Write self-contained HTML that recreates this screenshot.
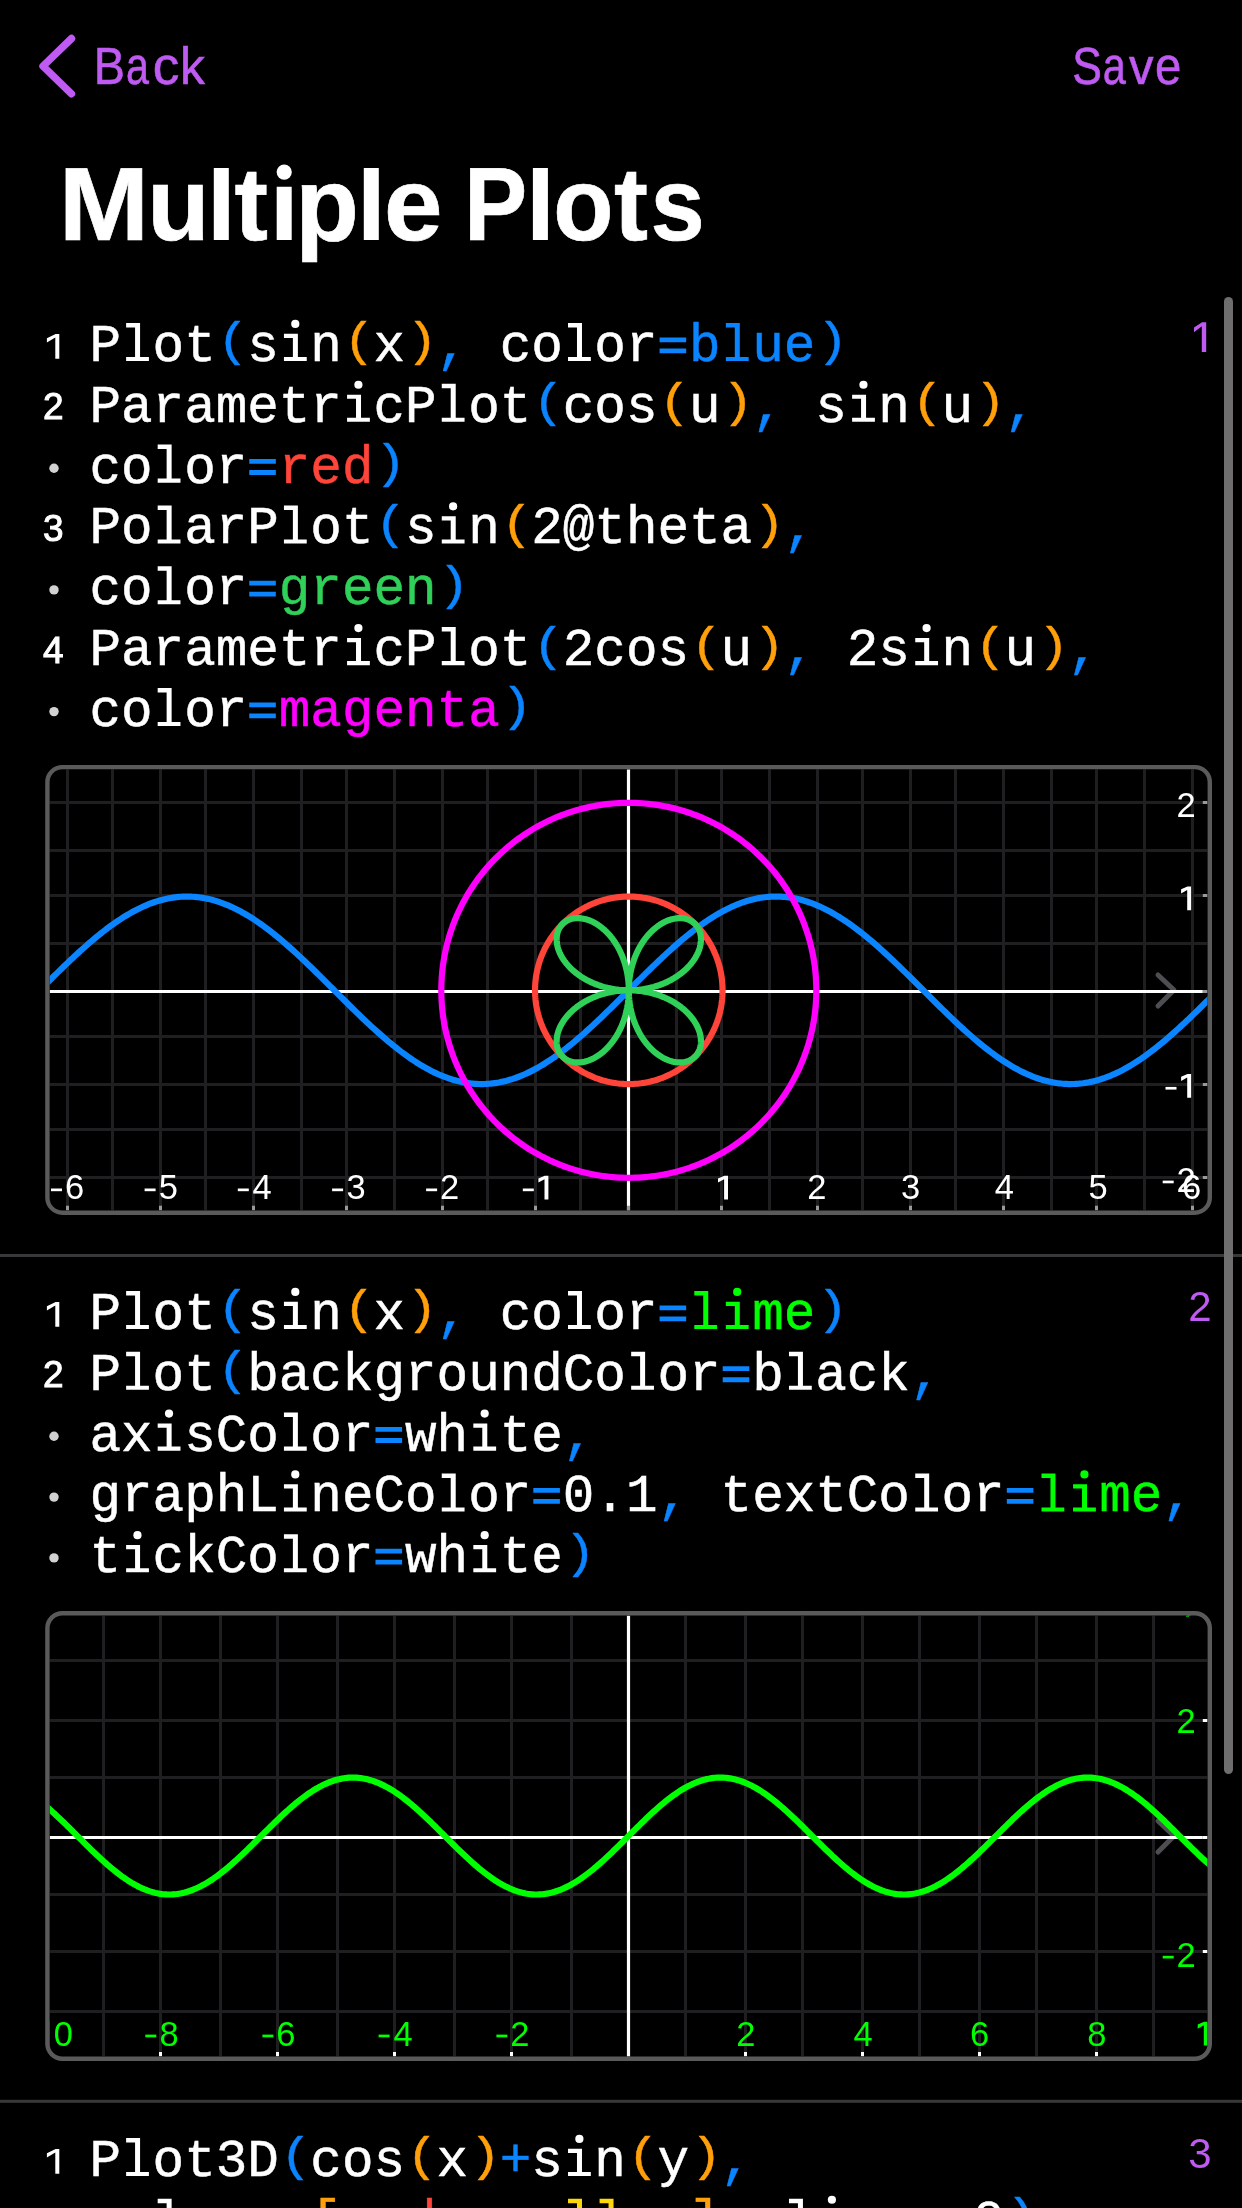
<!DOCTYPE html>
<html><head><meta charset="utf-8"><title>Multiple Plots</title>
<style>
html,body{margin:0;padding:0;background:#000;width:1242px;height:2208px;overflow:hidden;}
svg{display:block;will-change:transform;}
.code{font-family:"Liberation Mono",monospace;font-size:52.6px;stroke-width:0.5px;}
.ln{font-family:"Liberation Sans",sans-serif;font-size:37px;fill:#fff;stroke:#fff;stroke-width:1.0px;}
.sn{font-family:"Liberation Sans",sans-serif;font-size:42px;fill:#BF5AF2;}
.lab{font-family:"Liberation Sans",sans-serif;font-size:34.5px;}
.nav{font-family:"Liberation Sans",sans-serif;font-size:51px;fill:#BF5AF2;stroke:#BF5AF2;stroke-width:0.6px;}
.title{font-family:"Liberation Sans",sans-serif;font-weight:bold;font-size:104.5px;fill:#fff;stroke:#fff;stroke-width:0.7px;}
</style></head>
<body>
<svg width="1242" height="2208" viewBox="0 0 1242 2208">
<rect width="1242" height="2208" fill="#000"/>
<path d="M71.5 38.5L43 66.2L71.5 93.8" stroke="#BF5AF2" stroke-width="7.4" fill="none" stroke-linecap="round" stroke-linejoin="round"/>
<text class="nav" transform="translate(93.76 84) scale(0.9173 1)" x="0" y="0">B</text><text class="nav" transform="translate(125.95 84) scale(0.8092 1)" x="0" y="0">a</text><text class="nav" transform="translate(152.73 84) scale(1.0460 1)" x="0" y="0">c</text><text class="nav" transform="translate(179.95 84) scale(0.9757 1)" x="0" y="0">k</text>
<text class="nav" transform="translate(1072.28 84) scale(0.8719 1)" x="0" y="0">S</text><text class="nav" transform="translate(1102.64 84) scale(0.8131 1)" x="0" y="0">a</text><text class="nav" transform="translate(1128.93 84) scale(0.9622 1)" x="0" y="0">v</text><text class="nav" transform="translate(1154.99 84) scale(0.9277 1)" x="0" y="0">e</text>
<text class="title" transform="translate(58.70 240) scale(1.0374 1)" x="0" y="0">M</text><text class="title" transform="translate(147.13 240) scale(0.9750 1)" x="0" y="0">u</text><text class="title" transform="translate(234.42 240) scale(0.9613 1)" x="0" y="0">t</text><text class="title" transform="translate(295.28 240) scale(0.9970 1)" x="0" y="0">p</text><text class="title" transform="translate(383.94 240) scale(1.0067 1)" x="0" y="0">e</text><text class="title" transform="translate(464.01 240) scale(0.9063 1)" x="0" y="0">P</text><text class="title" transform="translate(553.20 240) scale(0.9431 1)" x="0" y="0">o</text><text class="title" transform="translate(614.10 240) scale(0.9768 1)" x="0" y="0">t</text><text class="title" transform="translate(650.62 240) scale(0.9331 1)" x="0" y="0">s</text>
<path d="M213.8 168H228.8V240H213.8ZM363.8 168H378.8V240H363.8ZM532.9 168H547.9V240H532.9ZM276.7 186.7H291.7V240H276.7Z" fill="#fff"/>
<circle cx="284.2" cy="172.1" r="7.6" fill="#fff"/>
<path d="M59.3 334.0V358.7H55.3V337.6L46.9 342.5V338.3L55.6 334.0Z" fill="#FFFFFF"/>
<text transform="translate(0 361.00) scale(1 1.03)" x="89.5" y="0" class="code" xml:space="preserve"><tspan fill="#FFFFFF" stroke="#FFFFFF">P ot</tspan><tspan fill="#0A84FF" stroke="#0A84FF"> </tspan><tspan fill="#FFFFFF" stroke="#FFFFFF">s n</tspan><tspan fill="#FF9F0A" stroke="#FF9F0A"> </tspan><tspan fill="#FFFFFF" stroke="#FFFFFF">x</tspan><tspan fill="#FF9F0A" stroke="#FF9F0A"> </tspan><tspan fill="#0A84FF" stroke="#0A84FF">,</tspan><tspan fill="#FFFFFF" stroke="#FFFFFF"> co or</tspan><tspan fill="#0A84FF" stroke="#0A84FF"> </tspan><tspan fill="#0A84FF" stroke="#0A84FF">b ue</tspan><tspan fill="#0A84FF" stroke="#0A84FF"> </tspan></text>
<path d="M126.12 322.90H140.07V356.90H148.92V361.00H126.12V356.90H135.07V327.40H126.12Z" fill="#FFFFFF"/>
<text class="code" fill="#0A84FF" stroke="#0A84FF" transform="translate(216.96 355.40) scale(1 0.895)" x="0" y="0">(</text>
<path d="M283.94 333.80H297.89V356.90H306.74V361.00H283.94V356.90H292.89V338.00H283.94Z" fill="#FFFFFF"/><circle cx="295.29" cy="323.90" r="4.1" fill="#FFFFFF"/>
<text class="code" fill="#FF9F0A" stroke="#FF9F0A" transform="translate(343.22 355.40) scale(1 0.895)" x="0" y="0">(</text>
<text class="code" fill="#FF9F0A" stroke="#FF9F0A" transform="translate(406.35 355.40) scale(1 0.895)" x="0" y="0">)</text>
<path d="M568.03 322.90H581.98V356.90H590.83V361.00H568.03V356.90H576.98V327.40H568.03Z" fill="#FFFFFF"/>
<path d="M659.57 337.40h26.6v4.8h-26.6zM659.57 348.40h26.6v4.9h-26.6z" fill="#0A84FF"/>
<path d="M725.85 322.90H739.80V356.90H748.65V361.00H725.85V356.90H734.80V327.40H725.85Z" fill="#0A84FF"/>
<text class="code" fill="#0A84FF" stroke="#0A84FF" transform="translate(816.70 355.40) scale(1 0.895)" x="0" y="0">)</text>
<text x="53.3" y="419.4" class="ln" text-anchor="middle">2</text>
<text transform="translate(0 421.83) scale(1 1.03)" x="89.5" y="0" class="code" xml:space="preserve"><tspan fill="#FFFFFF" stroke="#FFFFFF">Parametr cP ot</tspan><tspan fill="#0A84FF" stroke="#0A84FF"> </tspan><tspan fill="#FFFFFF" stroke="#FFFFFF">cos</tspan><tspan fill="#FF9F0A" stroke="#FF9F0A"> </tspan><tspan fill="#FFFFFF" stroke="#FFFFFF">u</tspan><tspan fill="#FF9F0A" stroke="#FF9F0A"> </tspan><tspan fill="#0A84FF" stroke="#0A84FF">,</tspan><tspan fill="#FFFFFF" stroke="#FFFFFF"> s n</tspan><tspan fill="#FF9F0A" stroke="#FF9F0A"> </tspan><tspan fill="#FFFFFF" stroke="#FFFFFF">u</tspan><tspan fill="#FF9F0A" stroke="#FF9F0A"> </tspan><tspan fill="#0A84FF" stroke="#0A84FF">,</tspan></text>
<path d="M347.07 394.63H361.02V417.73H369.87V421.83H347.07V417.73H356.02V398.83H347.07Z" fill="#FFFFFF"/><circle cx="358.42" cy="384.73" r="4.1" fill="#FFFFFF"/>
<path d="M441.77 383.73H455.72V417.73H464.57V421.83H441.77V417.73H450.72V388.23H441.77Z" fill="#FFFFFF"/>
<text class="code" fill="#0A84FF" stroke="#0A84FF" transform="translate(532.61 416.23) scale(1 0.895)" x="0" y="0">(</text>
<text class="code" fill="#FF9F0A" stroke="#FF9F0A" transform="translate(658.87 416.23) scale(1 0.895)" x="0" y="0">(</text>
<text class="code" fill="#FF9F0A" stroke="#FF9F0A" transform="translate(722.00 416.23) scale(1 0.895)" x="0" y="0">)</text>
<path d="M852.11 394.63H866.06V417.73H874.91V421.83H852.11V417.73H861.06V398.83H852.11Z" fill="#FFFFFF"/><circle cx="863.46" cy="384.73" r="4.1" fill="#FFFFFF"/>
<text class="code" fill="#FF9F0A" stroke="#FF9F0A" transform="translate(911.39 416.23) scale(1 0.895)" x="0" y="0">(</text>
<text class="code" fill="#FF9F0A" stroke="#FF9F0A" transform="translate(974.52 416.23) scale(1 0.895)" x="0" y="0">)</text>
<circle cx="54" cy="468.3" r="4.7" fill="#D2D2D2"/>
<text transform="translate(0 482.66) scale(1 1.03)" x="89.5" y="0" class="code" xml:space="preserve"><tspan fill="#FFFFFF" stroke="#FFFFFF">co or</tspan><tspan fill="#0A84FF" stroke="#0A84FF"> </tspan><tspan fill="#FF453A" stroke="#FF453A">red</tspan><tspan fill="#0A84FF" stroke="#0A84FF"> </tspan></text>
<path d="M157.68 444.56H171.63V478.56H180.48V482.66H157.68V478.56H166.63V449.06H157.68Z" fill="#FFFFFF"/>
<path d="M249.23 459.06h26.6v4.8h-26.6zM249.23 470.06h26.6v4.9h-26.6z" fill="#0A84FF"/>
<text class="code" fill="#0A84FF" stroke="#0A84FF" transform="translate(374.79 477.06) scale(1 0.895)" x="0" y="0">)</text>
<text x="53.3" y="541.1" class="ln" text-anchor="middle">3</text>
<text transform="translate(0 543.49) scale(1 1.03)" x="89.5" y="0" class="code" xml:space="preserve"><tspan fill="#FFFFFF" stroke="#FFFFFF">Po arP ot</tspan><tspan fill="#0A84FF" stroke="#0A84FF"> </tspan><tspan fill="#FFFFFF" stroke="#FFFFFF">s n</tspan><tspan fill="#FF9F0A" stroke="#FF9F0A"> </tspan><tspan fill="#FFFFFF" stroke="#FFFFFF">2@theta</tspan><tspan fill="#FF9F0A" stroke="#FF9F0A"> </tspan><tspan fill="#0A84FF" stroke="#0A84FF">,</tspan></text>
<path d="M157.68 505.39H171.63V539.39H180.48V543.49H157.68V539.39H166.63V509.89H157.68Z" fill="#FFFFFF"/>
<path d="M283.94 505.39H297.89V539.39H306.74V543.49H283.94V539.39H292.89V509.89H283.94Z" fill="#FFFFFF"/>
<text class="code" fill="#0A84FF" stroke="#0A84FF" transform="translate(374.79 537.89) scale(1 0.895)" x="0" y="0">(</text>
<path d="M441.77 516.29H455.72V539.39H464.57V543.49H441.77V539.39H450.72V520.49H441.77Z" fill="#FFFFFF"/><circle cx="453.12" cy="506.39" r="4.1" fill="#FFFFFF"/>
<text class="code" fill="#FF9F0A" stroke="#FF9F0A" transform="translate(501.05 537.89) scale(1 0.895)" x="0" y="0">(</text>
<text class="code" fill="#FF9F0A" stroke="#FF9F0A" transform="translate(753.57 537.89) scale(1 0.895)" x="0" y="0">)</text>
<circle cx="54" cy="589.9" r="4.7" fill="#D2D2D2"/>
<text transform="translate(0 604.32) scale(1 1.03)" x="89.5" y="0" class="code" xml:space="preserve"><tspan fill="#FFFFFF" stroke="#FFFFFF">co or</tspan><tspan fill="#0A84FF" stroke="#0A84FF"> </tspan><tspan fill="#30D158" stroke="#30D158">green</tspan><tspan fill="#0A84FF" stroke="#0A84FF"> </tspan></text>
<path d="M157.68 566.22H171.63V600.22H180.48V604.32H157.68V600.22H166.63V570.72H157.68Z" fill="#FFFFFF"/>
<path d="M249.23 580.72h26.6v4.8h-26.6zM249.23 591.72h26.6v4.9h-26.6z" fill="#0A84FF"/>
<text class="code" fill="#0A84FF" stroke="#0A84FF" transform="translate(437.92 598.72) scale(1 0.895)" x="0" y="0">)</text>
<text x="53.3" y="662.8" class="ln" text-anchor="middle">4</text>
<text transform="translate(0 665.15) scale(1 1.03)" x="89.5" y="0" class="code" xml:space="preserve"><tspan fill="#FFFFFF" stroke="#FFFFFF">Parametr cP ot</tspan><tspan fill="#0A84FF" stroke="#0A84FF"> </tspan><tspan fill="#FFFFFF" stroke="#FFFFFF">2cos</tspan><tspan fill="#FF9F0A" stroke="#FF9F0A"> </tspan><tspan fill="#FFFFFF" stroke="#FFFFFF">u</tspan><tspan fill="#FF9F0A" stroke="#FF9F0A"> </tspan><tspan fill="#0A84FF" stroke="#0A84FF">,</tspan><tspan fill="#FFFFFF" stroke="#FFFFFF"> 2s n</tspan><tspan fill="#FF9F0A" stroke="#FF9F0A"> </tspan><tspan fill="#FFFFFF" stroke="#FFFFFF">u</tspan><tspan fill="#FF9F0A" stroke="#FF9F0A"> </tspan><tspan fill="#0A84FF" stroke="#0A84FF">,</tspan></text>
<path d="M347.07 637.95H361.02V661.05H369.87V665.15H347.07V661.05H356.02V642.15H347.07Z" fill="#FFFFFF"/><circle cx="358.42" cy="628.05" r="4.1" fill="#FFFFFF"/>
<path d="M441.77 627.05H455.72V661.05H464.57V665.15H441.77V661.05H450.72V631.55H441.77Z" fill="#FFFFFF"/>
<text class="code" fill="#0A84FF" stroke="#0A84FF" transform="translate(532.61 659.55) scale(1 0.895)" x="0" y="0">(</text>
<text class="code" fill="#FF9F0A" stroke="#FF9F0A" transform="translate(690.44 659.55) scale(1 0.895)" x="0" y="0">(</text>
<text class="code" fill="#FF9F0A" stroke="#FF9F0A" transform="translate(753.57 659.55) scale(1 0.895)" x="0" y="0">)</text>
<path d="M915.24 637.95H929.19V661.05H938.04V665.15H915.24V661.05H924.19V642.15H915.24Z" fill="#FFFFFF"/><circle cx="926.59" cy="628.05" r="4.1" fill="#FFFFFF"/>
<text class="code" fill="#FF9F0A" stroke="#FF9F0A" transform="translate(974.52 659.55) scale(1 0.895)" x="0" y="0">(</text>
<text class="code" fill="#FF9F0A" stroke="#FF9F0A" transform="translate(1037.65 659.55) scale(1 0.895)" x="0" y="0">)</text>
<circle cx="54" cy="711.6" r="4.7" fill="#D2D2D2"/>
<text transform="translate(0 725.98) scale(1 1.03)" x="89.5" y="0" class="code" xml:space="preserve"><tspan fill="#FFFFFF" stroke="#FFFFFF">co or</tspan><tspan fill="#0A84FF" stroke="#0A84FF"> </tspan><tspan fill="#FF00FF" stroke="#FF00FF">magenta</tspan><tspan fill="#0A84FF" stroke="#0A84FF"> </tspan></text>
<path d="M157.68 687.88H171.63V721.88H180.48V725.98H157.68V721.88H166.63V692.38H157.68Z" fill="#FFFFFF"/>
<path d="M249.23 702.38h26.6v4.8h-26.6zM249.23 713.38h26.6v4.9h-26.6z" fill="#0A84FF"/>
<text class="code" fill="#0A84FF" stroke="#0A84FF" transform="translate(501.05 720.38) scale(1 0.895)" x="0" y="0">)</text>
<path d="M1206.2 322.2V352.0H1201.8V326.2L1194.0 332.2V327.6L1202.1 322.2Z" fill="#BF5AF2"/>
<clipPath id="c1"><rect x="49.6" y="769.3" width="1158.0" height="441.20000000000005" rx="12"/></clipPath>
<g clip-path="url(#c1)">
<path d="M67.5 769.3V1210.5 M112.5 769.3V1210.5 M160.5 769.3V1210.5 M205.5 769.3V1210.5 M253.5 769.3V1210.5 M301.5 769.3V1210.5 M346.5 769.3V1210.5 M394.5 769.3V1210.5 M442.5 769.3V1210.5 M487.5 769.3V1210.5 M535.5 769.3V1210.5 M580.5 769.3V1210.5 M628.5 769.3V1210.5 M676.5 769.3V1210.5 M721.5 769.3V1210.5 M769.5 769.3V1210.5 M817.5 769.3V1210.5 M862.5 769.3V1210.5 M910.5 769.3V1210.5 M955.5 769.3V1210.5 M1003.5 769.3V1210.5 M1051.5 769.3V1210.5 M1096.5 769.3V1210.5 M1144.5 769.3V1210.5 M1192.5 769.3V1210.5 M49.6 1177.5H1207.6 M49.6 1129.5H1207.6 M49.6 1084.5H1207.6 M49.6 1036.5H1207.6 M49.6 991.5H1207.6 M49.6 943.5H1207.6 M49.6 895.5H1207.6 M49.6 850.5H1207.6 M49.6 802.5H1207.6" stroke="#1F1F21" stroke-width="3" fill="none"/>
<path d="M1158 975.0L1174 990.0L1158 1006.0" stroke="#4E4E52" stroke-width="5" fill="none" stroke-linecap="round" stroke-linejoin="round"/>
<path d="M628.5 769.3V1210.5M49.6 991.5H1202.8" stroke="#FFFFFF" stroke-width="3.2" fill="none"/>
<path d="M67.5 1205.8V1210.5 M160.5 1205.8V1210.5 M253.5 1205.8V1210.5 M346.5 1205.8V1210.5 M442.5 1205.8V1210.5 M535.5 1205.8V1210.5 M628.5 1205.8V1210.5 M721.5 1205.8V1210.5 M817.5 1205.8V1210.5 M910.5 1205.8V1210.5 M1003.5 1205.8V1210.5 M1096.5 1205.8V1210.5 M1192.5 1205.8V1210.5 M1202.8 802.5H1207.6 M1202.8 895.5H1207.6 M1202.8 991.5H1207.6 M1202.8 1084.5H1207.6 M1202.8 1177.5H1207.6" stroke="#9A9A9A" stroke-width="3" fill="none"/>
<path d="M28.80 1001.23L30.80 999.24L32.80 997.25L34.80 995.25L36.80 993.25L38.80 991.25L40.80 989.25L42.80 987.25L44.80 985.25L46.80 983.26L48.80 981.27L50.80 979.28L52.80 977.29L54.80 975.32L56.80 973.35L58.80 971.38L60.80 969.43L62.80 967.48L64.80 965.55L66.80 963.63L68.80 961.71L70.80 959.82L72.80 957.93L74.80 956.06L76.80 954.21L78.80 952.37L80.80 950.55L82.80 948.75L84.80 946.97L86.80 945.20L88.80 943.46L90.80 941.74L92.80 940.04L94.80 938.36L96.80 936.71L98.80 935.08L100.80 933.48L102.80 931.90L104.80 930.35L106.80 928.82L108.80 927.33L110.80 925.86L112.80 924.42L114.80 923.01L116.80 921.64L118.80 920.29L120.80 918.98L122.80 917.69L124.80 916.45L126.80 915.23L128.80 914.05L130.80 912.90L132.80 911.79L134.80 910.72L136.80 909.68L138.80 908.68L140.80 907.71L142.80 906.78L144.80 905.89L146.80 905.04L148.80 904.23L150.80 903.46L152.80 902.72L154.80 902.03L156.80 901.38L158.80 900.76L160.80 900.19L162.80 899.66L164.80 899.17L166.80 898.72L168.80 898.31L170.80 897.95L172.80 897.63L174.80 897.34L176.80 897.11L178.80 896.91L180.80 896.76L182.80 896.64L184.80 896.58L186.80 896.55L188.80 896.57L190.80 896.63L192.80 896.73L194.80 896.87L196.80 897.06L198.80 897.29L200.80 897.56L202.80 897.88L204.80 898.23L206.80 898.63L208.80 899.07L210.80 899.55L212.80 900.07L214.80 900.64L216.80 901.24L218.80 901.89L220.80 902.57L222.80 903.30L224.80 904.06L226.80 904.87L228.80 905.71L230.80 906.59L232.80 907.51L234.80 908.47L236.80 909.46L238.80 910.49L240.80 911.56L242.80 912.66L244.80 913.80L246.80 914.98L248.80 916.18L250.80 917.43L252.80 918.70L254.80 920.01L256.80 921.35L258.80 922.72L260.80 924.12L262.80 925.55L264.80 927.01L266.80 928.50L268.80 930.02L270.80 931.56L272.80 933.14L274.80 934.73L276.80 936.36L278.80 938.01L280.80 939.68L282.80 941.37L284.80 943.09L286.80 944.83L288.80 946.59L290.80 948.37L292.80 950.16L294.80 951.98L296.80 953.81L298.80 955.66L300.80 957.53L302.80 959.41L304.80 961.31L306.80 963.22L308.80 965.14L310.80 967.07L312.80 969.01L314.80 970.96L316.80 972.93L318.80 974.89L320.80 976.87L322.80 978.85L324.80 980.84L326.80 982.83L328.80 984.83L330.80 986.83L332.80 988.82L334.80 990.82L336.80 992.82L338.80 994.82L340.80 996.82L342.80 998.81L344.80 1000.80L346.80 1002.79L348.80 1004.77L350.80 1006.74L352.80 1008.70L354.80 1010.66L356.80 1012.61L358.80 1014.55L360.80 1016.47L362.80 1018.39L364.80 1020.29L366.80 1022.18L368.80 1024.05L370.80 1025.91L372.80 1027.75L374.80 1029.57L376.80 1031.38L378.80 1033.17L380.80 1034.94L382.80 1036.69L384.80 1038.41L386.80 1040.12L388.80 1041.80L390.80 1043.46L392.80 1045.10L394.80 1046.71L396.80 1048.29L398.80 1049.85L400.80 1051.38L402.80 1052.88L404.80 1054.36L406.80 1055.80L408.80 1057.22L410.80 1058.61L412.80 1059.96L414.80 1061.28L416.80 1062.57L418.80 1063.83L420.80 1065.05L422.80 1066.24L424.80 1067.40L426.80 1068.52L428.80 1069.60L430.80 1070.65L432.80 1071.66L434.80 1072.64L436.80 1073.58L438.80 1074.48L440.80 1075.34L442.80 1076.16L444.80 1076.94L446.80 1077.69L448.80 1078.39L450.80 1079.06L452.80 1079.68L454.80 1080.26L456.80 1080.81L458.80 1081.31L460.80 1081.77L462.80 1082.18L464.80 1082.56L466.80 1082.89L468.80 1083.19L470.80 1083.44L472.80 1083.64L474.80 1083.81L476.80 1083.93L478.80 1084.01L480.80 1084.05L482.80 1084.04L484.80 1083.99L486.80 1083.90L488.80 1083.77L490.80 1083.59L492.80 1083.37L494.80 1083.11L496.80 1082.81L498.80 1082.47L500.80 1082.08L502.80 1081.65L504.80 1081.18L506.80 1080.67L508.80 1080.11L510.80 1079.52L512.80 1078.89L514.80 1078.21L516.80 1077.50L518.80 1076.74L520.80 1075.95L522.80 1075.12L524.80 1074.24L526.80 1073.33L528.80 1072.39L530.80 1071.40L532.80 1070.38L534.80 1069.32L536.80 1068.23L538.80 1067.10L540.80 1065.93L542.80 1064.74L544.80 1063.50L546.80 1062.24L548.80 1060.94L550.80 1059.61L552.80 1058.25L554.80 1056.85L556.80 1055.43L558.80 1053.97L560.80 1052.49L562.80 1050.98L564.80 1049.44L566.80 1047.88L568.80 1046.29L570.80 1044.67L572.80 1043.03L574.80 1041.36L576.80 1039.67L578.80 1037.96L580.80 1036.23L582.80 1034.48L584.80 1032.70L586.80 1030.91L588.80 1029.10L590.80 1027.27L592.80 1025.42L594.80 1023.56L596.80 1021.68L598.80 1019.79L600.80 1017.89L602.80 1015.97L604.80 1014.04L606.80 1012.10L608.80 1010.15L610.80 1008.19L612.80 1006.22L614.80 1004.25L616.80 1002.27L618.80 1000.28L620.80 998.29L622.80 996.30L624.80 994.30L626.80 992.30L628.80 990.30L630.80 988.30L632.80 986.30L634.80 984.30L636.80 982.31L638.80 980.32L640.80 978.33L642.80 976.35L644.80 974.38L646.80 972.41L648.80 970.45L650.80 968.50L652.80 966.56L654.80 964.63L656.80 962.71L658.80 960.81L660.80 958.92L662.80 957.04L664.80 955.18L666.80 953.33L668.80 951.50L670.80 949.69L672.80 947.90L674.80 946.12L676.80 944.37L678.80 942.64L680.80 940.93L682.80 939.24L684.80 937.57L686.80 935.93L688.80 934.31L690.80 932.72L692.80 931.16L694.80 929.62L696.80 928.11L698.80 926.63L700.80 925.17L702.80 923.75L704.80 922.35L706.80 920.99L708.80 919.66L710.80 918.36L712.80 917.10L714.80 915.86L716.80 914.67L718.80 913.50L720.80 912.37L722.80 911.28L724.80 910.22L726.80 909.20L728.80 908.21L730.80 907.27L732.80 906.36L734.80 905.48L736.80 904.65L738.80 903.86L740.80 903.10L742.80 902.39L744.80 901.71L746.80 901.08L748.80 900.49L750.80 899.93L752.80 899.42L754.80 898.95L756.80 898.52L758.80 898.13L760.80 897.79L762.80 897.49L764.80 897.23L766.80 897.01L768.80 896.83L770.80 896.70L772.80 896.61L774.80 896.56L776.80 896.55L778.80 896.59L780.80 896.67L782.80 896.79L784.80 896.96L786.80 897.16L788.80 897.41L790.80 897.71L792.80 898.04L794.80 898.42L796.80 898.83L798.80 899.29L800.80 899.79L802.80 900.34L804.80 900.92L806.80 901.54L808.80 902.21L810.80 902.91L812.80 903.66L814.80 904.44L816.80 905.26L818.80 906.12L820.80 907.02L822.80 907.96L824.80 908.94L826.80 909.95L828.80 911.00L830.80 912.08L832.80 913.20L834.80 914.36L836.80 915.55L838.80 916.77L840.80 918.03L842.80 919.32L844.80 920.64L846.80 921.99L848.80 923.38L850.80 924.80L852.80 926.24L854.80 927.72L856.80 929.22L858.80 930.75L860.80 932.31L862.80 933.89L864.80 935.50L866.80 937.14L868.80 938.80L870.80 940.48L872.80 942.19L874.80 943.91L876.80 945.66L878.80 947.43L880.80 949.22L882.80 951.03L884.80 952.85L886.80 954.69L888.80 956.55L890.80 958.42L892.80 960.31L894.80 962.21L896.80 964.13L898.80 966.05L900.80 967.99L902.80 969.94L904.80 971.90L906.80 973.86L908.80 975.83L910.80 977.81L912.80 979.80L914.80 981.79L916.80 983.78L918.80 985.78L920.80 987.78L922.80 989.78L924.80 991.78L926.80 993.77L928.80 995.77L930.80 997.77L932.80 999.76L934.80 1001.75L936.80 1003.73L938.80 1005.71L940.80 1007.67L942.80 1009.64L944.80 1011.59L946.80 1013.53L948.80 1015.46L950.80 1017.38L952.80 1019.29L954.80 1021.19L956.80 1023.07L958.80 1024.94L960.80 1026.79L962.80 1028.62L964.80 1030.44L966.80 1032.23L968.80 1034.01L970.80 1035.77L972.80 1037.51L974.80 1039.23L976.80 1040.92L978.80 1042.59L980.80 1044.24L982.80 1045.87L984.80 1047.46L986.80 1049.04L988.80 1050.58L990.80 1052.10L992.80 1053.59L994.80 1055.05L996.80 1056.48L998.80 1057.88L1000.80 1059.25L1002.80 1060.59L1004.80 1061.90L1006.80 1063.17L1008.80 1064.42L1010.80 1065.62L1012.80 1066.80L1014.80 1067.94L1016.80 1069.04L1018.80 1070.11L1020.80 1071.14L1022.80 1072.13L1024.80 1073.09L1026.80 1074.01L1028.80 1074.89L1030.80 1075.73L1032.80 1076.54L1034.80 1077.30L1036.80 1078.03L1038.80 1078.71L1040.80 1079.36L1042.80 1079.96L1044.80 1080.53L1046.80 1081.05L1048.80 1081.53L1050.80 1081.97L1052.80 1082.37L1054.80 1082.72L1056.80 1083.04L1058.80 1083.31L1060.80 1083.54L1062.80 1083.73L1064.80 1083.87L1066.80 1083.97L1068.80 1084.03L1070.80 1084.05L1072.80 1084.02L1074.80 1083.96L1076.80 1083.84L1078.80 1083.69L1080.80 1083.49L1082.80 1083.26L1084.80 1082.97L1086.80 1082.65L1088.80 1082.29L1090.80 1081.88L1092.80 1081.43L1094.80 1080.94L1096.80 1080.41L1098.80 1079.84L1100.80 1079.22L1102.80 1078.57L1104.80 1077.88L1106.80 1077.14L1108.80 1076.37L1110.80 1075.56L1112.80 1074.71L1114.80 1073.82L1116.80 1072.89L1118.80 1071.92L1120.80 1070.92L1122.80 1069.88L1124.80 1068.81L1126.80 1067.70L1128.80 1066.55L1130.80 1065.37L1132.80 1064.15L1134.80 1062.91L1136.80 1061.62L1138.80 1060.31L1140.80 1058.96L1142.80 1057.59L1144.80 1056.18L1146.80 1054.74L1148.80 1053.27L1150.80 1051.78L1152.80 1050.25L1154.80 1048.70L1156.80 1047.12L1158.80 1045.52L1160.80 1043.89L1162.80 1042.24L1164.80 1040.56L1166.80 1038.86L1168.80 1037.14L1170.80 1035.40L1172.80 1033.63L1174.80 1031.85L1176.80 1030.05L1178.80 1028.23L1180.80 1026.39L1182.80 1024.54L1184.80 1022.67L1186.80 1020.78L1188.80 1018.89L1190.80 1016.97L1192.80 1015.05L1194.80 1013.12L1196.80 1011.17L1198.80 1009.22L1200.80 1007.25L1202.80 1005.28L1204.80 1003.31L1206.80 1001.32L1208.80 999.33L1210.80 997.34L1212.80 995.35L1214.80 993.35L1216.80 991.35L1218.80 989.35L1220.80 987.35L1222.80 985.35L1224.80 983.35L1226.80 981.36L1228.80 979.37" stroke="#0A84FF" stroke-width="6.2" fill="none" stroke-linejoin="round"/>
<path d="M722.55 990.30L722.52 987.85L722.42 985.39L722.26 982.94L722.04 980.50L721.75 978.06L721.40 975.63L720.98 973.22L720.50 970.81L719.96 968.41L719.36 966.04L718.69 963.67L717.96 961.33L717.17 959.01L716.32 956.70L715.41 954.42L714.44 952.17L713.42 949.94L712.33 947.74L711.19 945.57L709.99 943.43L708.74 941.32L707.43 939.24L706.06 937.20L704.65 935.20L703.18 933.23L701.66 931.30L700.09 929.41L698.47 927.57L696.80 925.77L695.09 924.01L693.33 922.30L691.53 920.63L689.69 919.01L687.80 917.44L685.87 915.92L683.90 914.45L681.90 913.04L679.86 911.67L677.78 910.36L675.67 909.11L673.53 907.91L671.36 906.77L669.16 905.68L666.93 904.66L664.68 903.69L662.40 902.78L660.09 901.93L657.77 901.14L655.43 900.41L653.06 899.74L650.69 899.14L648.29 898.60L645.88 898.12L643.47 897.70L641.04 897.35L638.60 897.06L636.16 896.84L633.71 896.68L631.25 896.58L628.80 896.55L626.35 896.58L623.89 896.68L621.44 896.84L619.00 897.06L616.56 897.35L614.13 897.70L611.72 898.12L609.31 898.60L606.91 899.14L604.54 899.74L602.17 900.41L599.83 901.14L597.51 901.93L595.20 902.78L592.92 903.69L590.67 904.66L588.44 905.68L586.24 906.77L584.07 907.91L581.92 909.11L579.82 910.36L577.74 911.67L575.70 913.04L573.70 914.45L571.73 915.92L569.80 917.44L567.91 919.01L566.07 920.63L564.27 922.30L562.51 924.01L560.80 925.77L559.13 927.57L557.51 929.41L555.94 931.30L554.42 933.23L552.95 935.20L551.54 937.20L550.17 939.24L548.86 941.32L547.61 943.43L546.41 945.57L545.27 947.74L544.18 949.94L543.16 952.17L542.19 954.42L541.28 956.70L540.43 959.01L539.64 961.33L538.91 963.67L538.24 966.04L537.64 968.41L537.10 970.81L536.62 973.22L536.20 975.63L535.85 978.06L535.56 980.50L535.34 982.94L535.18 985.39L535.08 987.85L535.05 990.30L535.08 992.75L535.18 995.21L535.34 997.66L535.56 1000.10L535.85 1002.54L536.20 1004.97L536.62 1007.38L537.10 1009.79L537.64 1012.19L538.24 1014.56L538.91 1016.93L539.64 1019.27L540.43 1021.59L541.28 1023.90L542.19 1026.18L543.16 1028.43L544.18 1030.66L545.27 1032.86L546.41 1035.03L547.61 1037.17L548.86 1039.28L550.17 1041.36L551.54 1043.40L552.95 1045.40L554.42 1047.37L555.94 1049.30L557.51 1051.19L559.13 1053.03L560.80 1054.83L562.51 1056.59L564.27 1058.30L566.07 1059.97L567.91 1061.59L569.80 1063.16L571.73 1064.68L573.70 1066.15L575.70 1067.56L577.74 1068.93L579.82 1070.24L581.92 1071.49L584.07 1072.69L586.24 1073.83L588.44 1074.92L590.67 1075.94L592.92 1076.91L595.20 1077.82L597.51 1078.67L599.83 1079.46L602.17 1080.19L604.54 1080.86L606.91 1081.46L609.31 1082.00L611.72 1082.48L614.13 1082.90L616.56 1083.25L619.00 1083.54L621.44 1083.76L623.89 1083.92L626.35 1084.02L628.80 1084.05L631.25 1084.02L633.71 1083.92L636.16 1083.76L638.60 1083.54L641.04 1083.25L643.47 1082.90L645.88 1082.48L648.29 1082.00L650.69 1081.46L653.06 1080.86L655.43 1080.19L657.77 1079.46L660.09 1078.67L662.40 1077.82L664.68 1076.91L666.93 1075.94L669.16 1074.92L671.36 1073.83L673.53 1072.69L675.67 1071.49L677.78 1070.24L679.86 1068.93L681.90 1067.56L683.90 1066.15L685.87 1064.68L687.80 1063.16L689.69 1061.59L691.53 1059.97L693.33 1058.30L695.09 1056.59L696.80 1054.83L698.47 1053.03L700.09 1051.19L701.66 1049.30L703.18 1047.37L704.65 1045.40L706.06 1043.40L707.43 1041.36L708.74 1039.28L709.99 1037.17L711.19 1035.03L712.33 1032.86L713.42 1030.66L714.44 1028.43L715.41 1026.18L716.32 1023.90L717.17 1021.59L717.96 1019.27L718.69 1016.93L719.36 1014.56L719.96 1012.19L720.50 1009.79L720.98 1007.38L721.40 1004.97L721.75 1002.54L722.04 1000.10L722.26 997.66L722.42 995.21L722.52 992.75L722.55 990.30" stroke="#FF453A" stroke-width="6.2" fill="none" stroke-linejoin="round"/>
<path d="M628.80 990.30L630.76 990.28L632.72 990.22L634.68 990.12L636.64 989.97L638.59 989.79L640.53 989.56L642.46 989.30L644.38 988.99L646.29 988.65L648.18 988.26L650.07 987.84L651.93 987.38L653.78 986.88L655.61 986.34L657.41 985.77L659.20 985.16L660.96 984.51L662.70 983.83L664.41 983.12L666.10 982.37L667.76 981.59L669.38 980.78L670.98 979.94L672.55 979.07L674.08 978.17L675.58 977.24L677.04 976.29L678.47 975.30L679.86 974.30L681.21 973.27L682.52 972.22L683.79 971.15L685.03 970.06L686.22 968.95L687.36 967.82L688.47 966.68L689.53 965.52L690.55 964.34L691.52 963.16L692.45 961.96L693.33 960.76L694.16 959.54L694.95 958.32L695.69 957.10L696.38 955.87L697.02 954.63L697.62 953.40L698.16 952.17L698.66 950.93L699.11 949.71L699.51 948.48L699.87 947.26L700.17 946.05L700.42 944.85L700.63 943.65L700.78 942.47L700.89 941.31L700.95 940.15L700.97 939.01L700.93 937.89L700.85 936.79L700.72 935.71L700.55 934.65L700.33 933.61L700.07 932.59L699.76 931.60L699.40 930.64L699.01 929.70L698.57 928.79L698.09 927.91L697.57 927.07L697.01 926.25L696.41 925.47L695.77 924.72L695.09 924.01L694.38 923.33L693.63 922.69L692.85 922.09L692.03 921.53L691.19 921.01L690.31 920.53L689.40 920.09L688.46 919.70L687.50 919.34L686.51 919.03L685.49 918.77L684.45 918.55L683.39 918.38L682.31 918.25L681.21 918.17L680.09 918.13L678.95 918.15L677.79 918.21L676.63 918.32L675.45 918.47L674.25 918.68L673.05 918.93L671.84 919.23L670.62 919.59L669.39 919.99L668.17 920.44L666.93 920.94L665.70 921.48L664.47 922.08L663.23 922.72L662.00 923.41L660.78 924.15L659.56 924.94L658.34 925.77L657.14 926.65L655.94 927.58L654.76 928.55L653.58 929.57L652.42 930.63L651.28 931.74L650.15 932.88L649.04 934.07L647.95 935.31L646.88 936.58L645.83 937.89L644.80 939.24L643.80 940.63L642.81 942.06L641.86 943.52L640.93 945.02L640.03 946.55L639.16 948.12L638.32 949.72L637.51 951.34L636.73 953.00L635.98 954.69L635.27 956.40L634.59 958.14L633.94 959.90L633.33 961.69L632.76 963.49L632.22 965.32L631.72 967.17L631.26 969.03L630.84 970.92L630.45 972.81L630.11 974.72L629.80 976.64L629.54 978.57L629.31 980.51L629.13 982.46L628.98 984.42L628.88 986.38L628.82 988.34L628.80 990.30L628.82 992.26L628.88 994.22L628.98 996.18L629.13 998.14L629.31 1000.09L629.54 1002.03L629.80 1003.96L630.11 1005.88L630.45 1007.79L630.84 1009.68L631.26 1011.57L631.72 1013.43L632.22 1015.28L632.76 1017.11L633.33 1018.91L633.94 1020.70L634.59 1022.46L635.27 1024.20L635.98 1025.91L636.73 1027.60L637.51 1029.26L638.32 1030.88L639.16 1032.48L640.03 1034.05L640.93 1035.58L641.86 1037.08L642.81 1038.54L643.80 1039.97L644.80 1041.36L645.83 1042.71L646.88 1044.02L647.95 1045.29L649.04 1046.53L650.15 1047.72L651.28 1048.86L652.42 1049.97L653.58 1051.03L654.76 1052.05L655.94 1053.02L657.14 1053.95L658.34 1054.83L659.56 1055.66L660.78 1056.45L662.00 1057.19L663.23 1057.88L664.47 1058.52L665.70 1059.12L666.93 1059.66L668.17 1060.16L669.39 1060.61L670.62 1061.01L671.84 1061.37L673.05 1061.67L674.25 1061.92L675.45 1062.13L676.63 1062.28L677.79 1062.39L678.95 1062.45L680.09 1062.47L681.21 1062.43L682.31 1062.35L683.39 1062.22L684.45 1062.05L685.49 1061.83L686.51 1061.57L687.50 1061.26L688.46 1060.90L689.40 1060.51L690.31 1060.07L691.19 1059.59L692.03 1059.07L692.85 1058.51L693.63 1057.91L694.38 1057.27L695.09 1056.59L695.77 1055.88L696.41 1055.13L697.01 1054.35L697.57 1053.53L698.09 1052.69L698.57 1051.81L699.01 1050.90L699.40 1049.96L699.76 1049.00L700.07 1048.01L700.33 1046.99L700.55 1045.95L700.72 1044.89L700.85 1043.81L700.93 1042.71L700.97 1041.59L700.95 1040.45L700.89 1039.29L700.78 1038.13L700.63 1036.95L700.42 1035.75L700.17 1034.55L699.87 1033.34L699.51 1032.12L699.11 1030.89L698.66 1029.67L698.16 1028.43L697.62 1027.20L697.02 1025.97L696.38 1024.73L695.69 1023.50L694.95 1022.28L694.16 1021.06L693.33 1019.84L692.45 1018.64L691.52 1017.44L690.55 1016.26L689.53 1015.08L688.47 1013.92L687.36 1012.78L686.22 1011.65L685.03 1010.54L683.79 1009.45L682.52 1008.38L681.21 1007.33L679.86 1006.30L678.47 1005.30L677.04 1004.31L675.58 1003.36L674.08 1002.43L672.55 1001.53L670.98 1000.66L669.38 999.82L667.76 999.01L666.10 998.23L664.41 997.48L662.70 996.77L660.96 996.09L659.20 995.44L657.41 994.83L655.61 994.26L653.78 993.72L651.93 993.22L650.07 992.76L648.18 992.34L646.29 991.95L644.38 991.61L642.46 991.30L640.53 991.04L638.59 990.81L636.64 990.63L634.68 990.48L632.72 990.38L630.76 990.32L628.80 990.30L626.84 990.32L624.88 990.38L622.92 990.48L620.96 990.63L619.01 990.81L617.07 991.04L615.14 991.30L613.22 991.61L611.31 991.95L609.42 992.34L607.53 992.76L605.67 993.22L603.82 993.72L601.99 994.26L600.19 994.83L598.40 995.44L596.64 996.09L594.90 996.77L593.19 997.48L591.50 998.23L589.84 999.01L588.22 999.82L586.62 1000.66L585.05 1001.53L583.52 1002.43L582.02 1003.36L580.56 1004.31L579.13 1005.30L577.74 1006.30L576.39 1007.33L575.08 1008.38L573.81 1009.45L572.57 1010.54L571.38 1011.65L570.24 1012.78L569.13 1013.92L568.07 1015.08L567.05 1016.26L566.08 1017.44L565.15 1018.64L564.27 1019.84L563.44 1021.06L562.65 1022.28L561.91 1023.50L561.22 1024.73L560.58 1025.97L559.98 1027.20L559.44 1028.43L558.94 1029.67L558.49 1030.89L558.09 1032.12L557.73 1033.34L557.43 1034.55L557.18 1035.75L556.97 1036.95L556.82 1038.13L556.71 1039.29L556.65 1040.45L556.63 1041.59L556.67 1042.71L556.75 1043.81L556.88 1044.89L557.05 1045.95L557.27 1046.99L557.53 1048.01L557.84 1049.00L558.20 1049.96L558.59 1050.90L559.03 1051.81L559.51 1052.69L560.03 1053.53L560.59 1054.35L561.19 1055.13L561.83 1055.88L562.51 1056.59L563.22 1057.27L563.97 1057.91L564.75 1058.51L565.57 1059.07L566.41 1059.59L567.29 1060.07L568.20 1060.51L569.14 1060.90L570.10 1061.26L571.09 1061.57L572.11 1061.83L573.15 1062.05L574.21 1062.22L575.29 1062.35L576.39 1062.43L577.51 1062.47L578.65 1062.45L579.81 1062.39L580.97 1062.28L582.15 1062.13L583.35 1061.92L584.55 1061.67L585.76 1061.37L586.98 1061.01L588.21 1060.61L589.43 1060.16L590.67 1059.66L591.90 1059.12L593.13 1058.52L594.37 1057.88L595.60 1057.19L596.82 1056.45L598.04 1055.66L599.26 1054.83L600.46 1053.95L601.66 1053.02L602.84 1052.05L604.02 1051.03L605.18 1049.97L606.32 1048.86L607.45 1047.72L608.56 1046.53L609.65 1045.29L610.72 1044.02L611.77 1042.71L612.80 1041.36L613.80 1039.97L614.79 1038.54L615.74 1037.08L616.67 1035.58L617.57 1034.05L618.44 1032.48L619.28 1030.88L620.09 1029.26L620.87 1027.60L621.62 1025.91L622.33 1024.20L623.01 1022.46L623.66 1020.70L624.27 1018.91L624.84 1017.11L625.38 1015.28L625.88 1013.43L626.34 1011.57L626.76 1009.68L627.15 1007.79L627.49 1005.88L627.80 1003.96L628.06 1002.03L628.29 1000.09L628.47 998.14L628.62 996.18L628.72 994.22L628.78 992.26L628.80 990.30L628.78 988.34L628.72 986.38L628.62 984.42L628.47 982.46L628.29 980.51L628.06 978.57L627.80 976.64L627.49 974.72L627.15 972.81L626.76 970.92L626.34 969.03L625.88 967.17L625.38 965.32L624.84 963.49L624.27 961.69L623.66 959.90L623.01 958.14L622.33 956.40L621.62 954.69L620.87 953.00L620.09 951.34L619.28 949.72L618.44 948.12L617.57 946.55L616.67 945.02L615.74 943.52L614.79 942.06L613.80 940.63L612.80 939.24L611.77 937.89L610.72 936.58L609.65 935.31L608.56 934.07L607.45 932.88L606.32 931.74L605.18 930.63L604.02 929.57L602.84 928.55L601.66 927.58L600.46 926.65L599.26 925.77L598.04 924.94L596.82 924.15L595.60 923.41L594.37 922.72L593.13 922.08L591.90 921.48L590.67 920.94L589.43 920.44L588.21 919.99L586.98 919.59L585.76 919.23L584.55 918.93L583.35 918.68L582.15 918.47L580.97 918.32L579.81 918.21L578.65 918.15L577.51 918.13L576.39 918.17L575.29 918.25L574.21 918.38L573.15 918.55L572.11 918.77L571.09 919.03L570.10 919.34L569.14 919.70L568.20 920.09L567.29 920.53L566.41 921.01L565.57 921.53L564.75 922.09L563.97 922.69L563.22 923.33L562.51 924.01L561.83 924.72L561.19 925.47L560.59 926.25L560.03 927.07L559.51 927.91L559.03 928.79L558.59 929.70L558.20 930.64L557.84 931.60L557.53 932.59L557.27 933.61L557.05 934.65L556.88 935.71L556.75 936.79L556.67 937.89L556.63 939.01L556.65 940.15L556.71 941.31L556.82 942.47L556.97 943.65L557.18 944.85L557.43 946.05L557.73 947.26L558.09 948.48L558.49 949.71L558.94 950.93L559.44 952.17L559.98 953.40L560.58 954.63L561.22 955.87L561.91 957.10L562.65 958.32L563.44 959.54L564.27 960.76L565.15 961.96L566.08 963.16L567.05 964.34L568.07 965.52L569.13 966.68L570.24 967.82L571.38 968.95L572.57 970.06L573.81 971.15L575.08 972.22L576.39 973.27L577.74 974.30L579.13 975.30L580.56 976.29L582.02 977.24L583.52 978.17L585.05 979.07L586.62 979.94L588.22 980.78L589.84 981.59L591.50 982.37L593.19 983.12L594.90 983.83L596.64 984.51L598.40 985.16L600.19 985.77L601.99 986.34L603.82 986.88L605.67 987.38L607.53 987.84L609.42 988.26L611.31 988.65L613.22 988.99L615.14 989.30L617.07 989.56L619.01 989.79L620.96 989.97L622.92 990.12L624.88 990.22L626.84 990.28L628.80 990.30" stroke="#30D158" stroke-width="6.2" fill="none" stroke-linejoin="round"/>
<path d="M816.30 990.30L816.27 987.03L816.19 983.76L816.04 980.49L815.84 977.22L815.59 973.96L815.27 970.70L814.90 967.45L814.48 964.21L813.99 960.97L813.45 957.74L812.86 954.52L812.20 951.32L811.49 948.12L810.73 944.94L809.91 941.77L809.04 938.62L808.11 935.48L807.12 932.36L806.08 929.26L804.99 926.17L803.85 923.11L802.65 920.06L801.39 917.04L800.09 914.04L798.73 911.06L797.32 908.11L795.86 905.18L794.35 902.27L792.79 899.40L791.18 896.55L789.52 893.73L787.81 890.94L786.05 888.18L784.24 885.45L782.39 882.75L780.49 880.09L778.54 877.46L776.55 874.86L774.51 872.30L772.43 869.78L770.31 867.29L768.14 864.84L765.93 862.43L763.68 860.05L761.38 857.72L759.05 855.42L756.67 853.17L754.26 850.96L751.81 848.79L749.32 846.67L746.80 844.59L744.24 842.55L741.64 840.56L739.01 838.61L736.35 836.71L733.65 834.86L730.92 833.05L728.16 831.29L725.37 829.58L722.55 827.92L719.70 826.31L716.83 824.75L713.92 823.24L710.99 821.78L708.04 820.37L705.06 819.01L702.06 817.71L699.04 816.45L695.99 815.25L692.93 814.11L689.84 813.02L686.74 811.98L683.62 810.99L680.48 810.06L677.33 809.19L674.16 808.37L670.98 807.61L667.78 806.90L664.58 806.24L661.36 805.65L658.13 805.11L654.89 804.62L651.65 804.20L648.40 803.83L645.14 803.51L641.88 803.26L638.61 803.06L635.34 802.91L632.07 802.83L628.80 802.80L625.53 802.83L622.26 802.91L618.99 803.06L615.72 803.26L612.46 803.51L609.20 803.83L605.95 804.20L602.71 804.62L599.47 805.11L596.24 805.65L593.02 806.24L589.82 806.90L586.62 807.61L583.44 808.37L580.27 809.19L577.12 810.06L573.98 810.99L570.86 811.98L567.76 813.02L564.67 814.11L561.61 815.25L558.56 816.45L555.54 817.71L552.54 819.01L549.56 820.37L546.61 821.78L543.68 823.24L540.77 824.75L537.90 826.31L535.05 827.92L532.23 829.58L529.44 831.29L526.68 833.05L523.95 834.86L521.25 836.71L518.59 838.61L515.96 840.56L513.36 842.55L510.80 844.59L508.28 846.67L505.79 848.79L503.34 850.96L500.93 853.17L498.55 855.42L496.22 857.72L493.92 860.05L491.67 862.43L489.46 864.84L487.29 867.29L485.17 869.78L483.09 872.30L481.05 874.86L479.06 877.46L477.11 880.09L475.21 882.75L473.36 885.45L471.55 888.18L469.79 890.94L468.08 893.73L466.42 896.55L464.81 899.40L463.25 902.27L461.74 905.18L460.28 908.11L458.87 911.06L457.51 914.04L456.21 917.04L454.95 920.06L453.75 923.11L452.61 926.17L451.52 929.26L450.48 932.36L449.49 935.48L448.56 938.62L447.69 941.77L446.87 944.94L446.11 948.12L445.40 951.32L444.74 954.52L444.15 957.74L443.61 960.97L443.12 964.21L442.70 967.45L442.33 970.70L442.01 973.96L441.76 977.22L441.56 980.49L441.41 983.76L441.33 987.03L441.30 990.30L441.33 993.57L441.41 996.84L441.56 1000.11L441.76 1003.38L442.01 1006.64L442.33 1009.90L442.70 1013.15L443.12 1016.39L443.61 1019.63L444.15 1022.86L444.74 1026.08L445.40 1029.28L446.11 1032.48L446.87 1035.66L447.69 1038.83L448.56 1041.98L449.49 1045.12L450.48 1048.24L451.52 1051.34L452.61 1054.43L453.75 1057.49L454.95 1060.54L456.21 1063.56L457.51 1066.56L458.87 1069.54L460.28 1072.49L461.74 1075.42L463.25 1078.33L464.81 1081.20L466.42 1084.05L468.08 1086.87L469.79 1089.66L471.55 1092.42L473.36 1095.15L475.21 1097.85L477.11 1100.51L479.06 1103.14L481.05 1105.74L483.09 1108.30L485.17 1110.82L487.29 1113.31L489.46 1115.76L491.67 1118.17L493.92 1120.55L496.22 1122.88L498.55 1125.18L500.93 1127.43L503.34 1129.64L505.79 1131.81L508.28 1133.93L510.80 1136.01L513.36 1138.05L515.96 1140.04L518.59 1141.99L521.25 1143.89L523.95 1145.74L526.68 1147.55L529.44 1149.31L532.23 1151.02L535.05 1152.68L537.90 1154.29L540.77 1155.85L543.68 1157.36L546.61 1158.82L549.56 1160.23L552.54 1161.59L555.54 1162.89L558.56 1164.15L561.61 1165.35L564.67 1166.49L567.76 1167.58L570.86 1168.62L573.98 1169.61L577.12 1170.54L580.27 1171.41L583.44 1172.23L586.62 1172.99L589.82 1173.70L593.02 1174.36L596.24 1174.95L599.47 1175.49L602.71 1175.98L605.95 1176.40L609.20 1176.77L612.46 1177.09L615.72 1177.34L618.99 1177.54L622.26 1177.69L625.53 1177.77L628.80 1177.80L632.07 1177.77L635.34 1177.69L638.61 1177.54L641.88 1177.34L645.14 1177.09L648.40 1176.77L651.65 1176.40L654.89 1175.98L658.13 1175.49L661.36 1174.95L664.58 1174.36L667.78 1173.70L670.98 1172.99L674.16 1172.23L677.33 1171.41L680.48 1170.54L683.62 1169.61L686.74 1168.62L689.84 1167.58L692.93 1166.49L695.99 1165.35L699.04 1164.15L702.06 1162.89L705.06 1161.59L708.04 1160.23L710.99 1158.82L713.92 1157.36L716.83 1155.85L719.70 1154.29L722.55 1152.68L725.37 1151.02L728.16 1149.31L730.92 1147.55L733.65 1145.74L736.35 1143.89L739.01 1141.99L741.64 1140.04L744.24 1138.05L746.80 1136.01L749.32 1133.93L751.81 1131.81L754.26 1129.64L756.67 1127.43L759.05 1125.18L761.38 1122.88L763.68 1120.55L765.93 1118.17L768.14 1115.76L770.31 1113.31L772.43 1110.82L774.51 1108.30L776.55 1105.74L778.54 1103.14L780.49 1100.51L782.39 1097.85L784.24 1095.15L786.05 1092.42L787.81 1089.66L789.52 1086.87L791.18 1084.05L792.79 1081.20L794.35 1078.33L795.86 1075.42L797.32 1072.49L798.73 1069.54L800.09 1066.56L801.39 1063.56L802.65 1060.54L803.85 1057.49L804.99 1054.43L806.08 1051.34L807.12 1048.24L808.11 1045.12L809.04 1041.98L809.91 1038.83L810.73 1035.66L811.49 1032.48L812.20 1029.28L812.86 1026.08L813.45 1022.86L813.99 1019.63L814.48 1016.39L814.90 1013.15L815.27 1009.90L815.59 1006.64L815.84 1003.38L816.04 1000.11L816.19 996.84L816.27 993.57L816.30 990.30" stroke="#FF00FF" stroke-width="6.2" fill="none" stroke-linejoin="round"/>
<rect x="51.0" y="1188.5" width="11.0" height="2.7" fill="#FFFFFF"/><text x="64.9" y="1199.4" class="lab" fill="#FFFFFF">6</text>
<rect x="144.6" y="1188.5" width="11.0" height="2.7" fill="#FFFFFF"/><text x="158.8" y="1199.4" class="lab" fill="#FFFFFF">5</text>
<rect x="237.8" y="1188.5" width="11.0" height="2.7" fill="#FFFFFF"/><text x="252.6" y="1199.4" class="lab" fill="#FFFFFF">4</text>
<rect x="332.1" y="1188.5" width="11.0" height="2.7" fill="#FFFFFF"/><text x="346.4" y="1199.4" class="lab" fill="#FFFFFF">3</text>
<rect x="426.1" y="1188.5" width="11.0" height="2.7" fill="#FFFFFF"/><text x="440.0" y="1199.4" class="lab" fill="#FFFFFF">2</text>
<rect x="522.8" y="1188.5" width="11.0" height="2.7" fill="#FFFFFF"/><path d="M548.4 1175.7V1199.4H544.5V1179.2L538.4 1182.6V1178.5L544.8 1175.7Z" fill="#FFFFFF"/>
<path d="M728.0 1175.7V1199.4H724.1V1179.2L718.0 1182.6V1178.5L724.4 1175.7Z" fill="#FFFFFF"/>
<text x="807.2" y="1199.4" class="lab" fill="#FFFFFF">2</text>
<text x="901.1" y="1199.4" class="lab" fill="#FFFFFF">3</text>
<text x="994.8" y="1199.4" class="lab" fill="#FFFFFF">4</text>
<text x="1088.5" y="1199.4" class="lab" fill="#FFFFFF">5</text>
<text x="1182.1" y="1199.4" class="lab" fill="#FFFFFF">6</text>
<text x="1176.5" y="816.5" class="lab" fill="#FFFFFF">2</text>
<path d="M1191.1 886.5V910.3H1187.2V890.0L1181.1 893.4V889.3L1187.5 886.5Z" fill="#FFFFFF"/>
<rect x="1165.5" y="1086.9" width="11.0" height="2.7" fill="#FFFFFF"/><path d="M1191.1 1074.0V1097.8H1187.2V1077.5L1181.1 1080.9V1076.8L1187.5 1074.0Z" fill="#FFFFFF"/>
<rect x="1162.7" y="1180.6" width="11.0" height="2.7" fill="#FFFFFF"/><text x="1176.5" y="1191.5" class="lab" fill="#FFFFFF">2</text>
</g>
<rect x="47.400000000000006" y="767.1" width="1162.3999999999999" height="445.6" rx="15" fill="none" stroke="#5A5A5A" stroke-width="4.4"/>
<rect x="0" y="1254" width="1242" height="3" fill="#38383A"/>
<path d="M59.3 1302.0V1326.7H55.3V1305.6L46.9 1310.5V1306.3L55.6 1302.0Z" fill="#FFFFFF"/>
<text transform="translate(0 1329.00) scale(1 1.03)" x="89.5" y="0" class="code" xml:space="preserve"><tspan fill="#FFFFFF" stroke="#FFFFFF">P ot</tspan><tspan fill="#0A84FF" stroke="#0A84FF"> </tspan><tspan fill="#FFFFFF" stroke="#FFFFFF">s n</tspan><tspan fill="#FF9F0A" stroke="#FF9F0A"> </tspan><tspan fill="#FFFFFF" stroke="#FFFFFF">x</tspan><tspan fill="#FF9F0A" stroke="#FF9F0A"> </tspan><tspan fill="#0A84FF" stroke="#0A84FF">,</tspan><tspan fill="#FFFFFF" stroke="#FFFFFF"> co or</tspan><tspan fill="#0A84FF" stroke="#0A84FF"> </tspan><tspan fill="#00FF00" stroke="#00FF00">  me</tspan><tspan fill="#0A84FF" stroke="#0A84FF"> </tspan></text>
<path d="M126.12 1290.90H140.07V1324.90H148.92V1329.00H126.12V1324.90H135.07V1295.40H126.12Z" fill="#FFFFFF"/>
<text class="code" fill="#0A84FF" stroke="#0A84FF" transform="translate(216.96 1323.40) scale(1 0.895)" x="0" y="0">(</text>
<path d="M283.94 1301.80H297.89V1324.90H306.74V1329.00H283.94V1324.90H292.89V1306.00H283.94Z" fill="#FFFFFF"/><circle cx="295.29" cy="1291.90" r="4.1" fill="#FFFFFF"/>
<text class="code" fill="#FF9F0A" stroke="#FF9F0A" transform="translate(343.22 1323.40) scale(1 0.895)" x="0" y="0">(</text>
<text class="code" fill="#FF9F0A" stroke="#FF9F0A" transform="translate(406.35 1323.40) scale(1 0.895)" x="0" y="0">)</text>
<path d="M568.03 1290.90H581.98V1324.90H590.83V1329.00H568.03V1324.90H576.98V1295.40H568.03Z" fill="#FFFFFF"/>
<path d="M659.57 1305.40h26.6v4.8h-26.6zM659.57 1316.40h26.6v4.9h-26.6z" fill="#0A84FF"/>
<path d="M694.29 1290.90H708.24V1324.90H717.09V1329.00H694.29V1324.90H703.24V1295.40H694.29Z" fill="#00FF00"/>
<path d="M725.85 1301.80H739.80V1324.90H748.65V1329.00H725.85V1324.90H734.80V1306.00H725.85Z" fill="#00FF00"/><circle cx="737.20" cy="1291.90" r="4.1" fill="#00FF00"/>
<text class="code" fill="#0A84FF" stroke="#0A84FF" transform="translate(816.70 1323.40) scale(1 0.895)" x="0" y="0">)</text>
<text x="53.3" y="1387.4" class="ln" text-anchor="middle">2</text>
<text transform="translate(0 1389.83) scale(1 1.03)" x="89.5" y="0" class="code" xml:space="preserve"><tspan fill="#FFFFFF" stroke="#FFFFFF">P ot</tspan><tspan fill="#0A84FF" stroke="#0A84FF"> </tspan><tspan fill="#FFFFFF" stroke="#FFFFFF">backgroundCo or</tspan><tspan fill="#0A84FF" stroke="#0A84FF"> </tspan><tspan fill="#FFFFFF" stroke="#FFFFFF">b ack</tspan><tspan fill="#0A84FF" stroke="#0A84FF">,</tspan></text>
<path d="M126.12 1351.73H140.07V1385.73H148.92V1389.83H126.12V1385.73H135.07V1356.23H126.12Z" fill="#FFFFFF"/>
<text class="code" fill="#0A84FF" stroke="#0A84FF" transform="translate(216.96 1384.23) scale(1 0.895)" x="0" y="0">(</text>
<path d="M631.16 1351.73H645.11V1385.73H653.96V1389.83H631.16V1385.73H640.11V1356.23H631.16Z" fill="#FFFFFF"/>
<path d="M722.70 1366.23h26.6v4.8h-26.6zM722.70 1377.23h26.6v4.9h-26.6z" fill="#0A84FF"/>
<path d="M788.98 1351.73H802.93V1385.73H811.78V1389.83H788.98V1385.73H797.93V1356.23H788.98Z" fill="#FFFFFF"/>
<circle cx="54" cy="1436.3" r="4.7" fill="#D2D2D2"/>
<text transform="translate(0 1450.66) scale(1 1.03)" x="89.5" y="0" class="code" xml:space="preserve"><tspan fill="#FFFFFF" stroke="#FFFFFF">ax sCo or</tspan><tspan fill="#0A84FF" stroke="#0A84FF"> </tspan><tspan fill="#FFFFFF" stroke="#FFFFFF">wh te</tspan><tspan fill="#0A84FF" stroke="#0A84FF">,</tspan></text>
<path d="M157.68 1423.46H171.63V1446.56H180.48V1450.66H157.68V1446.56H166.63V1427.66H157.68Z" fill="#FFFFFF"/><circle cx="169.03" cy="1413.56" r="4.1" fill="#FFFFFF"/>
<path d="M283.94 1412.56H297.89V1446.56H306.74V1450.66H283.94V1446.56H292.89V1417.06H283.94Z" fill="#FFFFFF"/>
<path d="M375.49 1427.06h26.6v4.8h-26.6zM375.49 1438.06h26.6v4.9h-26.6z" fill="#0A84FF"/>
<path d="M473.33 1423.46H487.28V1446.56H496.13V1450.66H473.33V1446.56H482.28V1427.66H473.33Z" fill="#FFFFFF"/><circle cx="484.68" cy="1413.56" r="4.1" fill="#FFFFFF"/>
<circle cx="54" cy="1497.1" r="4.7" fill="#D2D2D2"/>
<text transform="translate(0 1511.49) scale(1 1.03)" x="89.5" y="0" class="code" xml:space="preserve"><tspan fill="#FFFFFF" stroke="#FFFFFF">graphL neCo or</tspan><tspan fill="#0A84FF" stroke="#0A84FF"> </tspan><tspan fill="#FFFFFF" stroke="#FFFFFF">0.1</tspan><tspan fill="#0A84FF" stroke="#0A84FF">,</tspan><tspan fill="#FFFFFF" stroke="#FFFFFF"> textCo or</tspan><tspan fill="#0A84FF" stroke="#0A84FF"> </tspan><tspan fill="#00FF00" stroke="#00FF00">  me</tspan><tspan fill="#0A84FF" stroke="#0A84FF">,</tspan></text>
<path d="M283.94 1484.29H297.89V1507.39H306.74V1511.49H283.94V1507.39H292.89V1488.49H283.94Z" fill="#FFFFFF"/><circle cx="295.29" cy="1474.39" r="4.1" fill="#FFFFFF"/>
<path d="M441.77 1473.39H455.72V1507.39H464.57V1511.49H441.77V1507.39H450.72V1477.89H441.77Z" fill="#FFFFFF"/>
<path d="M533.31 1487.89h26.6v4.8h-26.6zM533.31 1498.89h26.6v4.9h-26.6z" fill="#0A84FF"/>
<path d="M915.24 1473.39H929.19V1507.39H938.04V1511.49H915.24V1507.39H924.19V1477.89H915.24Z" fill="#FFFFFF"/>
<path d="M1006.79 1487.89h26.6v4.8h-26.6zM1006.79 1498.89h26.6v4.9h-26.6z" fill="#0A84FF"/>
<path d="M1041.50 1473.39H1055.45V1507.39H1064.30V1511.49H1041.50V1507.39H1050.45V1477.89H1041.50Z" fill="#00FF00"/>
<path d="M1073.07 1484.29H1087.02V1507.39H1095.87V1511.49H1073.07V1507.39H1082.02V1488.49H1073.07Z" fill="#00FF00"/><circle cx="1084.42" cy="1474.39" r="4.1" fill="#00FF00"/>
<circle cx="54" cy="1557.9" r="4.7" fill="#D2D2D2"/>
<text transform="translate(0 1572.32) scale(1 1.03)" x="89.5" y="0" class="code" xml:space="preserve"><tspan fill="#FFFFFF" stroke="#FFFFFF">t ckCo or</tspan><tspan fill="#0A84FF" stroke="#0A84FF"> </tspan><tspan fill="#FFFFFF" stroke="#FFFFFF">wh te</tspan><tspan fill="#0A84FF" stroke="#0A84FF"> </tspan></text>
<path d="M126.12 1545.12H140.07V1568.22H148.92V1572.32H126.12V1568.22H135.07V1549.32H126.12Z" fill="#FFFFFF"/><circle cx="137.47" cy="1535.22" r="4.1" fill="#FFFFFF"/>
<path d="M283.94 1534.22H297.89V1568.22H306.74V1572.32H283.94V1568.22H292.89V1538.72H283.94Z" fill="#FFFFFF"/>
<path d="M375.49 1548.72h26.6v4.8h-26.6zM375.49 1559.72h26.6v4.9h-26.6z" fill="#0A84FF"/>
<path d="M473.33 1545.12H487.28V1568.22H496.13V1572.32H473.33V1568.22H482.28V1549.32H473.33Z" fill="#FFFFFF"/><circle cx="484.68" cy="1535.22" r="4.1" fill="#FFFFFF"/>
<text class="code" fill="#0A84FF" stroke="#0A84FF" transform="translate(564.18 1566.72) scale(1 0.895)" x="0" y="0">)</text>
<text x="1211.5" y="1321" class="sn" text-anchor="end">2</text>
<clipPath id="c2"><rect x="49.6" y="1615.4" width="1158.0" height="441.1999999999998" rx="12"/></clipPath>
<g clip-path="url(#c2)">
<path d="M103.5 1615.4V2056.6 M160.5 1615.4V2056.6 M220.5 1615.4V2056.6 M277.5 1615.4V2056.6 M337.5 1615.4V2056.6 M394.5 1615.4V2056.6 M454.5 1615.4V2056.6 M511.5 1615.4V2056.6 M571.5 1615.4V2056.6 M628.5 1615.4V2056.6 M685.5 1615.4V2056.6 M745.5 1615.4V2056.6 M802.5 1615.4V2056.6 M862.5 1615.4V2056.6 M919.5 1615.4V2056.6 M979.5 1615.4V2056.6 M1036.5 1615.4V2056.6 M1096.5 1615.4V2056.6 M1153.5 1615.4V2056.6 M49.6 2011.5H1207.6 M49.6 1951.5H1207.6 M49.6 1894.5H1207.6 M49.6 1837.5H1207.6 M49.6 1777.5H1207.6 M49.6 1720.5H1207.6 M49.6 1660.5H1207.6" stroke="#1F1F21" stroke-width="3" fill="none"/>
<path d="M1158 1821.0L1174 1836.0L1158 1852.0" stroke="#4E4E52" stroke-width="5" fill="none" stroke-linecap="round" stroke-linejoin="round"/>
<path d="M628.5 1615.4V2056.6M49.6 1837.5H1202.8" stroke="#FFFFFF" stroke-width="3.2" fill="none"/>
<path d="M43.5 2051.9V2056.6 M160.5 2051.9V2056.6 M277.5 2051.9V2056.6 M394.5 2051.9V2056.6 M511.5 2051.9V2056.6 M628.5 2051.9V2056.6 M745.5 2051.9V2056.6 M862.5 2051.9V2056.6 M979.5 2051.9V2056.6 M1096.5 2051.9V2056.6 M1213.5 2051.9V2056.6 M1202.8 1603.5H1207.6 M1202.8 1720.5H1207.6 M1202.8 1837.5H1207.6 M1202.8 1951.5H1207.6 M1202.8 2068.5H1207.6" stroke="#FFFFFF" stroke-width="3" fill="none"/>
<rect x="1186" y="1615.4" width="3" height="1.2" fill="#00FF00"/>
<path d="M-14.67 1777.56L-13.06 1777.58L-11.45 1777.63L-9.85 1777.74L-8.24 1777.89L-6.63 1778.08L-5.02 1778.31L-3.41 1778.59L-1.81 1778.91L-0.20 1779.28L1.41 1779.69L3.02 1780.14L4.63 1780.63L6.23 1781.17L7.84 1781.74L9.45 1782.36L11.06 1783.02L12.66 1783.72L14.27 1784.46L15.88 1785.23L17.49 1786.05L19.10 1786.90L20.70 1787.79L22.31 1788.72L23.92 1789.68L25.53 1790.68L27.14 1791.71L28.74 1792.78L30.35 1793.87L31.96 1795.00L33.57 1796.17L35.18 1797.36L36.78 1798.58L38.39 1799.83L40.00 1801.10L41.61 1802.40L43.22 1803.73L44.82 1805.08L46.43 1806.46L48.04 1807.86L49.65 1809.28L51.25 1810.72L52.86 1812.18L54.47 1813.65L56.08 1815.15L57.69 1816.66L59.29 1818.18L60.90 1819.72L62.51 1821.27L64.12 1822.83L65.73 1824.40L67.33 1825.98L68.94 1827.57L70.55 1829.16L72.16 1830.76L73.77 1832.37L75.37 1833.97L76.98 1835.58L78.59 1837.19L80.20 1838.79L81.81 1840.40L83.41 1842.00L85.02 1843.60L86.63 1845.19L88.24 1846.77L89.85 1848.35L91.45 1849.92L93.06 1851.47L94.67 1853.02L96.28 1854.55L97.88 1856.07L99.49 1857.57L101.10 1859.06L102.71 1860.53L104.32 1861.98L105.92 1863.41L107.53 1864.82L109.14 1866.21L110.75 1867.57L112.36 1868.91L113.96 1870.23L115.57 1871.52L117.18 1872.79L118.79 1874.02L120.40 1875.23L122.00 1876.41L123.61 1877.56L125.22 1878.67L126.83 1879.76L128.44 1880.81L130.04 1881.82L131.65 1882.81L133.26 1883.75L134.87 1884.66L136.47 1885.54L138.08 1886.37L139.69 1887.17L141.30 1887.93L142.91 1888.65L144.51 1889.33L146.12 1889.97L147.73 1890.57L149.34 1891.13L150.95 1891.65L152.55 1892.12L154.16 1892.56L155.77 1892.95L157.38 1893.29L158.99 1893.60L160.59 1893.86L162.20 1894.07L163.81 1894.24L165.42 1894.37L167.03 1894.46L168.63 1894.50L170.24 1894.49L171.85 1894.44L173.46 1894.35L175.07 1894.21L176.67 1894.03L178.28 1893.81L179.89 1893.54L181.50 1893.23L183.10 1892.87L184.71 1892.47L186.32 1892.03L187.93 1891.55L189.54 1891.03L191.14 1890.46L192.75 1889.85L194.36 1889.20L195.97 1888.51L197.58 1887.78L199.18 1887.02L200.79 1886.21L202.40 1885.37L204.01 1884.49L205.62 1883.57L207.22 1882.61L208.83 1881.62L210.44 1880.60L212.05 1879.54L213.66 1878.45L215.26 1877.33L216.87 1876.18L218.48 1874.99L220.09 1873.78L221.69 1872.54L223.30 1871.27L224.91 1869.97L226.52 1868.65L228.13 1867.30L229.73 1865.93L231.34 1864.54L232.95 1863.12L234.56 1861.69L236.17 1860.24L237.77 1858.76L239.38 1857.27L240.99 1855.77L242.60 1854.25L244.21 1852.71L245.81 1851.16L247.42 1849.61L249.03 1848.04L250.64 1846.46L252.25 1844.87L253.85 1843.28L255.46 1841.68L257.07 1840.08L258.68 1838.47L260.29 1836.87L261.89 1835.26L263.50 1833.65L265.11 1832.05L266.72 1830.44L268.32 1828.85L269.93 1827.25L271.54 1825.67L273.15 1824.09L274.76 1822.52L276.36 1820.96L277.97 1819.41L279.58 1817.88L281.19 1816.36L282.80 1814.85L284.40 1813.36L286.01 1811.89L287.62 1810.43L289.23 1808.99L290.84 1807.58L292.44 1806.19L294.05 1804.81L295.66 1803.47L297.27 1802.14L298.88 1800.85L300.48 1799.58L302.09 1798.33L303.70 1797.12L305.31 1795.93L306.92 1794.78L308.52 1793.65L310.13 1792.56L311.74 1791.50L313.35 1790.48L314.95 1789.49L316.56 1788.53L318.17 1787.61L319.78 1786.73L321.39 1785.88L322.99 1785.08L324.60 1784.31L326.21 1783.58L327.82 1782.89L329.43 1782.24L331.03 1781.63L332.64 1781.06L334.25 1780.53L335.86 1780.05L337.47 1779.60L339.07 1779.20L340.68 1778.85L342.29 1778.53L343.90 1778.26L345.51 1778.04L347.11 1777.85L348.72 1777.71L350.33 1777.62L351.94 1777.57L353.54 1777.56L355.15 1777.60L356.76 1777.68L358.37 1777.81L359.98 1777.98L361.58 1778.19L363.19 1778.45L364.80 1778.75L366.41 1779.10L368.02 1779.49L369.62 1779.92L371.23 1780.39L372.84 1780.90L374.45 1781.46L376.06 1782.06L377.66 1782.70L379.27 1783.38L380.88 1784.10L382.49 1784.86L384.10 1785.65L385.70 1786.49L387.31 1787.36L388.92 1788.27L390.53 1789.22L392.14 1790.20L393.74 1791.21L395.35 1792.26L396.96 1793.34L398.57 1794.46L400.17 1795.60L401.78 1796.78L403.39 1797.99L405.00 1799.22L406.61 1800.49L408.21 1801.78L409.82 1803.09L411.43 1804.43L413.04 1805.80L414.65 1807.19L416.25 1808.59L417.86 1810.02L419.47 1811.47L421.08 1812.94L422.69 1814.43L424.29 1815.93L425.90 1817.45L427.51 1818.98L429.12 1820.52L430.73 1822.08L432.33 1823.65L433.94 1825.22L435.55 1826.81L437.16 1828.40L438.76 1829.99L440.37 1831.60L441.98 1833.20L443.59 1834.81L445.20 1836.42L446.80 1838.02L448.41 1839.63L450.02 1841.23L451.63 1842.83L453.24 1844.43L454.84 1846.01L456.45 1847.59L458.06 1849.17L459.67 1850.73L461.28 1852.28L462.88 1853.82L464.49 1855.34L466.10 1856.85L467.71 1858.35L469.32 1859.82L470.92 1861.28L472.53 1862.72L474.14 1864.14L475.75 1865.54L477.36 1866.92L478.96 1868.27L480.57 1869.60L482.18 1870.91L483.79 1872.18L485.39 1873.43L487.00 1874.65L488.61 1875.85L490.22 1877.01L491.83 1878.14L493.43 1879.24L495.04 1880.31L496.65 1881.34L498.26 1882.34L499.87 1883.30L501.47 1884.23L503.08 1885.12L504.69 1885.98L506.30 1886.79L507.91 1887.57L509.51 1888.31L511.12 1889.01L512.73 1889.67L514.34 1890.29L515.95 1890.87L517.55 1891.41L519.16 1891.90L520.77 1892.36L522.38 1892.77L523.98 1893.13L525.59 1893.46L527.20 1893.74L528.81 1893.97L530.42 1894.17L532.02 1894.32L533.63 1894.42L535.24 1894.48L536.85 1894.50L538.46 1894.47L540.06 1894.40L541.67 1894.28L543.28 1894.13L544.89 1893.92L546.50 1893.67L548.10 1893.38L549.71 1893.05L551.32 1892.67L552.93 1892.25L554.54 1891.79L556.14 1891.28L557.75 1890.74L559.36 1890.15L560.97 1889.52L562.58 1888.85L564.18 1888.14L565.79 1887.39L567.40 1886.60L569.01 1885.78L570.61 1884.91L572.22 1884.01L573.83 1883.07L575.44 1882.10L577.05 1881.10L578.65 1880.05L580.26 1878.98L581.87 1877.87L583.48 1876.73L585.09 1875.56L586.69 1874.36L588.30 1873.14L589.91 1871.88L591.52 1870.60L593.13 1869.29L594.73 1867.95L596.34 1866.59L597.95 1865.21L599.56 1863.81L601.17 1862.38L602.77 1860.93L604.38 1859.47L605.99 1857.99L607.60 1856.49L609.20 1854.98L610.81 1853.45L612.42 1851.91L614.03 1850.35L615.64 1848.79L617.24 1847.22L618.85 1845.63L620.46 1844.04L622.07 1842.45L623.68 1840.85L625.28 1839.24L626.89 1837.64L628.50 1836.03L630.11 1834.42L631.72 1832.82L633.32 1831.21L634.93 1829.61L636.54 1828.02L638.15 1826.43L639.76 1824.84L641.36 1823.27L642.97 1821.71L644.58 1820.15L646.19 1818.61L647.80 1817.08L649.40 1815.57L651.01 1814.07L652.62 1812.59L654.23 1811.13L655.83 1809.68L657.44 1808.25L659.05 1806.85L660.66 1805.47L662.27 1804.11L663.87 1802.77L665.48 1801.46L667.09 1800.18L668.70 1798.92L670.31 1797.70L671.91 1796.50L673.52 1795.33L675.13 1794.19L676.74 1793.08L678.35 1792.01L679.95 1790.96L681.56 1789.96L683.17 1788.99L684.78 1788.05L686.39 1787.15L687.99 1786.28L689.60 1785.46L691.21 1784.67L692.82 1783.92L694.42 1783.21L696.03 1782.54L697.64 1781.91L699.25 1781.32L700.86 1780.78L702.46 1780.27L704.07 1779.81L705.68 1779.39L707.29 1779.01L708.90 1778.68L710.50 1778.39L712.11 1778.14L713.72 1777.93L715.33 1777.78L716.94 1777.66L718.54 1777.59L720.15 1777.56L721.76 1777.58L723.37 1777.64L724.98 1777.74L726.58 1777.89L728.19 1778.09L729.80 1778.32L731.41 1778.60L733.02 1778.93L734.62 1779.29L736.23 1779.70L737.84 1780.16L739.45 1780.65L741.05 1781.19L742.66 1781.77L744.27 1782.39L745.88 1783.05L747.49 1783.75L749.09 1784.49L750.70 1785.27L752.31 1786.08L753.92 1786.94L755.53 1787.83L757.13 1788.76L758.74 1789.72L760.35 1790.72L761.96 1791.75L763.57 1792.82L765.17 1793.92L766.78 1795.05L768.39 1796.21L770.00 1797.41L771.61 1798.63L773.21 1799.88L774.82 1801.15L776.43 1802.46L778.04 1803.79L779.64 1805.14L781.25 1806.52L782.86 1807.92L784.47 1809.34L786.08 1810.78L787.68 1812.24L789.29 1813.71L790.90 1815.21L792.51 1816.72L794.12 1818.24L795.72 1819.78L797.33 1821.33L798.94 1822.89L800.55 1824.47L802.16 1826.05L803.76 1827.63L805.37 1829.23L806.98 1830.83L808.59 1832.43L810.20 1834.04L811.80 1835.64L813.41 1837.25L815.02 1838.86L816.63 1840.46L818.24 1842.07L819.84 1843.66L821.45 1845.25L823.06 1846.84L824.67 1848.41L826.27 1849.98L827.88 1851.54L829.49 1853.08L831.10 1854.61L832.71 1856.13L834.31 1857.63L835.92 1859.12L837.53 1860.59L839.14 1862.04L840.75 1863.47L842.35 1864.87L843.96 1866.26L845.57 1867.63L847.18 1868.97L848.79 1870.28L850.39 1871.57L852.00 1872.84L853.61 1874.07L855.22 1875.28L856.83 1876.46L858.43 1877.60L860.04 1878.72L861.65 1879.80L863.26 1880.85L864.86 1881.86L866.47 1882.84L868.08 1883.79L869.69 1884.70L871.30 1885.57L872.90 1886.41L874.51 1887.20L876.12 1887.96L877.73 1888.68L879.34 1889.36L880.94 1890.00L882.55 1890.60L884.16 1891.16L885.77 1891.67L887.38 1892.14L888.98 1892.57L890.59 1892.96L892.20 1893.31L893.81 1893.61L895.42 1893.87L897.02 1894.08L898.63 1894.25L900.24 1894.38L901.85 1894.46L903.46 1894.50L905.06 1894.49L906.67 1894.44L908.28 1894.35L909.89 1894.21L911.49 1894.02L913.10 1893.80L914.71 1893.53L916.32 1893.21L917.93 1892.86L919.53 1892.46L921.14 1892.01L922.75 1891.53L924.36 1891.00L925.97 1890.43L927.57 1889.82L929.18 1889.17L930.79 1888.48L932.40 1887.75L934.01 1886.98L935.61 1886.18L937.22 1885.33L938.83 1884.45L940.44 1883.53L942.05 1882.57L943.65 1881.58L945.26 1880.56L946.87 1879.50L948.48 1878.41L950.09 1877.28L951.69 1876.13L953.30 1874.94L954.91 1873.73L956.52 1872.48L958.12 1871.21L959.73 1869.92L961.34 1868.59L962.95 1867.25L964.56 1865.87L966.16 1864.48L967.77 1863.07L969.38 1861.63L970.99 1860.17L972.60 1858.70L974.20 1857.21L975.81 1855.70L977.42 1854.18L979.03 1852.65L980.64 1851.10L982.24 1849.54L983.85 1847.97L985.46 1846.39L987.07 1844.81L988.68 1843.21L990.28 1841.62L991.89 1840.01L993.50 1838.41L995.11 1836.80L996.71 1835.19L998.32 1833.59L999.93 1831.98L1001.54 1830.38L1003.15 1828.78L1004.75 1827.19L1006.36 1825.60L1007.97 1824.02L1009.58 1822.45L1011.19 1820.90L1012.79 1819.35L1014.40 1817.81L1016.01 1816.29L1017.62 1814.79L1019.23 1813.30L1020.83 1811.82L1022.44 1810.37L1024.05 1808.94L1025.66 1807.52L1027.27 1806.13L1028.87 1804.76L1030.48 1803.41L1032.09 1802.09L1033.70 1800.79L1035.31 1799.52L1036.91 1798.28L1038.52 1797.07L1040.13 1795.88L1041.74 1794.73L1043.34 1793.61L1044.95 1792.52L1046.56 1791.46L1048.17 1790.44L1049.78 1789.45L1051.38 1788.49L1052.99 1787.57L1054.60 1786.69L1056.21 1785.85L1057.82 1785.04L1059.42 1784.28L1061.03 1783.55L1062.64 1782.86L1064.25 1782.21L1065.86 1781.60L1067.46 1781.03L1069.07 1780.51L1070.68 1780.03L1072.29 1779.59L1073.90 1779.19L1075.50 1778.83L1077.11 1778.52L1078.72 1778.25L1080.33 1778.03L1081.93 1777.85L1083.54 1777.71L1085.15 1777.62L1086.76 1777.57L1088.37 1777.56L1089.97 1777.60L1091.58 1777.69L1093.19 1777.82L1094.80 1777.99L1096.41 1778.20L1098.01 1778.46L1099.62 1778.77L1101.23 1779.11L1102.84 1779.50L1104.45 1779.94L1106.05 1780.41L1107.66 1780.93L1109.27 1781.49L1110.88 1782.09L1112.49 1782.73L1114.09 1783.41L1115.70 1784.13L1117.31 1784.89L1118.92 1785.69L1120.53 1786.52L1122.13 1787.40L1123.74 1788.31L1125.35 1789.25L1126.96 1790.24L1128.56 1791.25L1130.17 1792.30L1131.78 1793.39L1133.39 1794.50L1135.00 1795.65L1136.60 1796.83L1138.21 1798.04L1139.82 1799.27L1141.43 1800.54L1143.04 1801.83L1144.64 1803.15L1146.25 1804.49L1147.86 1805.85L1149.47 1807.24L1151.08 1808.65L1152.68 1810.08L1154.29 1811.53L1155.90 1813.00L1157.51 1814.49L1159.12 1815.99L1160.72 1817.51L1162.33 1819.04L1163.94 1820.59L1165.55 1822.14L1167.15 1823.71L1168.76 1825.29L1170.37 1826.87L1171.98 1828.46L1173.59 1830.06L1175.19 1831.66L1176.80 1833.27L1178.41 1834.87L1180.02 1836.48L1181.63 1838.09L1183.23 1839.69L1184.84 1841.30L1186.45 1842.90L1188.06 1844.49L1189.67 1846.08L1191.27 1847.66L1192.88 1849.23L1194.49 1850.79L1196.10 1852.34L1197.71 1853.88L1199.31 1855.40L1200.92 1856.91L1202.53 1858.41L1204.14 1859.88L1205.75 1861.34L1207.35 1862.78L1208.96 1864.20L1210.57 1865.60L1212.18 1866.98L1213.78 1868.33L1215.39 1869.66L1217.00 1870.96L1218.61 1872.23L1220.22 1873.48L1221.82 1874.70L1223.43 1875.89L1225.04 1877.06L1226.65 1878.19L1228.26 1879.28L1229.86 1880.35L1231.47 1881.38L1233.08 1882.38L1234.69 1883.34L1236.30 1884.27L1237.90 1885.16L1239.51 1886.01L1241.12 1886.83L1242.73 1887.60L1244.34 1888.34L1245.94 1889.04L1247.55 1889.70L1249.16 1890.32L1250.77 1890.89L1252.37 1891.43L1253.98 1891.92L1255.59 1892.37L1257.20 1892.78L1258.81 1893.15L1260.41 1893.47L1262.02 1893.75L1263.63 1893.98L1265.24 1894.17L1266.85 1894.32L1268.45 1894.43L1270.06 1894.48L1271.67 1894.50" stroke="#00FF00" stroke-width="6.2" fill="none" stroke-linejoin="round"/>
<rect x="24.0" y="2034.6" width="11.0" height="2.7" fill="#00FF00"/><path d="M49.6 2021.8V2045.5H45.7V2025.3L39.6 2028.7V2024.6L46.0 2021.8Z" fill="#00FF00"/><text x="53.7" y="2045.5" class="lab" fill="#00FF00">0</text>
<rect x="145.3" y="2034.6" width="11.0" height="2.7" fill="#00FF00"/><text x="159.4" y="2045.5" class="lab" fill="#00FF00">8</text>
<rect x="262.4" y="2034.6" width="11.0" height="2.7" fill="#00FF00"/><text x="276.3" y="2045.5" class="lab" fill="#00FF00">6</text>
<rect x="378.6" y="2034.6" width="11.0" height="2.7" fill="#00FF00"/><text x="393.4" y="2045.5" class="lab" fill="#00FF00">4</text>
<rect x="496.4" y="2034.6" width="11.0" height="2.7" fill="#00FF00"/><text x="510.3" y="2045.5" class="lab" fill="#00FF00">2</text>
<text x="736.3" y="2045.5" class="lab" fill="#00FF00">2</text>
<text x="853.4" y="2045.5" class="lab" fill="#00FF00">4</text>
<text x="970.1" y="2045.5" class="lab" fill="#00FF00">6</text>
<text x="1087.2" y="2045.5" class="lab" fill="#00FF00">8</text>
<path d="M1207.7 2021.8V2045.5H1203.8V2025.3L1197.7 2028.7V2024.6L1204.1 2021.8Z" fill="#00FF00"/><text x="1211.8" y="2045.5" class="lab" fill="#00FF00">0</text>
<text x="1175.8" y="1615.9" class="lab" fill="#00FF00">4</text>
<text x="1176.5" y="1732.8" class="lab" fill="#00FF00">2</text>
<rect x="1162.7" y="1955.8" width="11.0" height="2.7" fill="#00FF00"/><text x="1176.5" y="1966.7" class="lab" fill="#00FF00">2</text>
<rect x="1161.0" y="2072.7" width="11.0" height="2.7" fill="#00FF00"/><text x="1175.8" y="2083.6" class="lab" fill="#00FF00">4</text>
</g>
<rect x="47.400000000000006" y="1613.2" width="1162.3999999999999" height="445.6" rx="15" fill="none" stroke="#5A5A5A" stroke-width="4.4"/>
<rect x="0" y="2099.8" width="1242" height="3" fill="#38383A"/>
<path d="M59.3 2149.0V2173.7H55.3V2152.6L46.9 2157.5V2153.3L55.6 2149.0Z" fill="#FFFFFF"/>
<text transform="translate(0 2176.00) scale(1 1.03)" x="89.5" y="0" class="code" xml:space="preserve"><tspan fill="#FFFFFF" stroke="#FFFFFF">P ot3D</tspan><tspan fill="#0A84FF" stroke="#0A84FF"> </tspan><tspan fill="#FFFFFF" stroke="#FFFFFF">cos</tspan><tspan fill="#FF9F0A" stroke="#FF9F0A"> </tspan><tspan fill="#FFFFFF" stroke="#FFFFFF">x</tspan><tspan fill="#FF9F0A" stroke="#FF9F0A"> </tspan><tspan fill="#0A84FF" stroke="#0A84FF">+</tspan><tspan fill="#FFFFFF" stroke="#FFFFFF">s n</tspan><tspan fill="#FF9F0A" stroke="#FF9F0A"> </tspan><tspan fill="#FFFFFF" stroke="#FFFFFF">y</tspan><tspan fill="#FF9F0A" stroke="#FF9F0A"> </tspan><tspan fill="#0A84FF" stroke="#0A84FF">,</tspan></text>
<path d="M126.12 2137.90H140.07V2171.90H148.92V2176.00H126.12V2171.90H135.07V2142.40H126.12Z" fill="#FFFFFF"/>
<text class="code" fill="#0A84FF" stroke="#0A84FF" transform="translate(280.09 2170.40) scale(1 0.895)" x="0" y="0">(</text>
<text class="code" fill="#FF9F0A" stroke="#FF9F0A" transform="translate(406.35 2170.40) scale(1 0.895)" x="0" y="0">(</text>
<text class="code" fill="#FF9F0A" stroke="#FF9F0A" transform="translate(469.48 2170.40) scale(1 0.895)" x="0" y="0">)</text>
<path d="M568.03 2148.80H581.98V2171.90H590.83V2176.00H568.03V2171.90H576.98V2153.00H568.03Z" fill="#FFFFFF"/><circle cx="579.38" cy="2138.90" r="4.1" fill="#FFFFFF"/>
<text class="code" fill="#FF9F0A" stroke="#FF9F0A" transform="translate(627.31 2170.40) scale(1 0.895)" x="0" y="0">(</text>
<text class="code" fill="#FF9F0A" stroke="#FF9F0A" transform="translate(690.44 2170.40) scale(1 0.895)" x="0" y="0">)</text>
<circle cx="54" cy="2222.4" r="4.7" fill="#D2D2D2"/>
<text transform="translate(0 2236.83) scale(1 1.03)" x="89.5" y="0" class="code" xml:space="preserve"><tspan fill="#FFFFFF" stroke="#FFFFFF">co ors</tspan><tspan fill="#0A84FF" stroke="#0A84FF"> </tspan><tspan fill="#FF9F0A" stroke="#FF9F0A">[</tspan><tspan fill="#FF453A" stroke="#FF453A">red</tspan><tspan fill="#0A84FF" stroke="#0A84FF">,</tspan><tspan fill="#FFFFFF" stroke="#FFFFFF"> </tspan><tspan fill="#FFD60A" stroke="#FFD60A">ye  ow</tspan><tspan fill="#FF9F0A" stroke="#FF9F0A">]</tspan><tspan fill="#0A84FF" stroke="#0A84FF">,</tspan><tspan fill="#FFFFFF" stroke="#FFFFFF">   nes</tspan><tspan fill="#0A84FF" stroke="#0A84FF"> </tspan><tspan fill="#FFFFFF" stroke="#FFFFFF">0</tspan><tspan fill="#0A84FF" stroke="#0A84FF"> </tspan></text>
<path d="M157.68 2198.73H171.63V2232.73H180.48V2236.83H157.68V2232.73H166.63V2203.23H157.68Z" fill="#FFFFFF"/>
<path d="M280.79 2213.23h26.6v4.8h-26.6zM280.79 2224.23h26.6v4.9h-26.6z" fill="#0A84FF"/>
<path d="M568.03 2198.73H581.98V2232.73H590.83V2236.83H568.03V2232.73H576.98V2203.23H568.03Z" fill="#FFD60A"/>
<path d="M599.59 2198.73H613.54V2232.73H622.39V2236.83H599.59V2232.73H608.54V2203.23H599.59Z" fill="#FFD60A"/>
<path d="M788.98 2198.73H802.93V2232.73H811.78V2236.83H788.98V2232.73H797.93V2203.23H788.98Z" fill="#FFFFFF"/>
<path d="M820.55 2209.63H834.50V2232.73H843.35V2236.83H820.55V2232.73H829.50V2213.83H820.55Z" fill="#FFFFFF"/><circle cx="831.90" cy="2199.73" r="4.1" fill="#FFFFFF"/>
<path d="M943.66 2213.23h26.6v4.8h-26.6zM943.66 2224.23h26.6v4.9h-26.6z" fill="#0A84FF"/>
<text class="code" fill="#0A84FF" stroke="#0A84FF" transform="translate(1006.09 2231.23) scale(1 0.895)" x="0" y="0">)</text>
<text x="1211.5" y="2167.5" class="sn" text-anchor="end">3</text>
<rect x="1224" y="297" width="9" height="1477" rx="4.5" fill="#6E6E6E"/>
</svg>
</body></html>
